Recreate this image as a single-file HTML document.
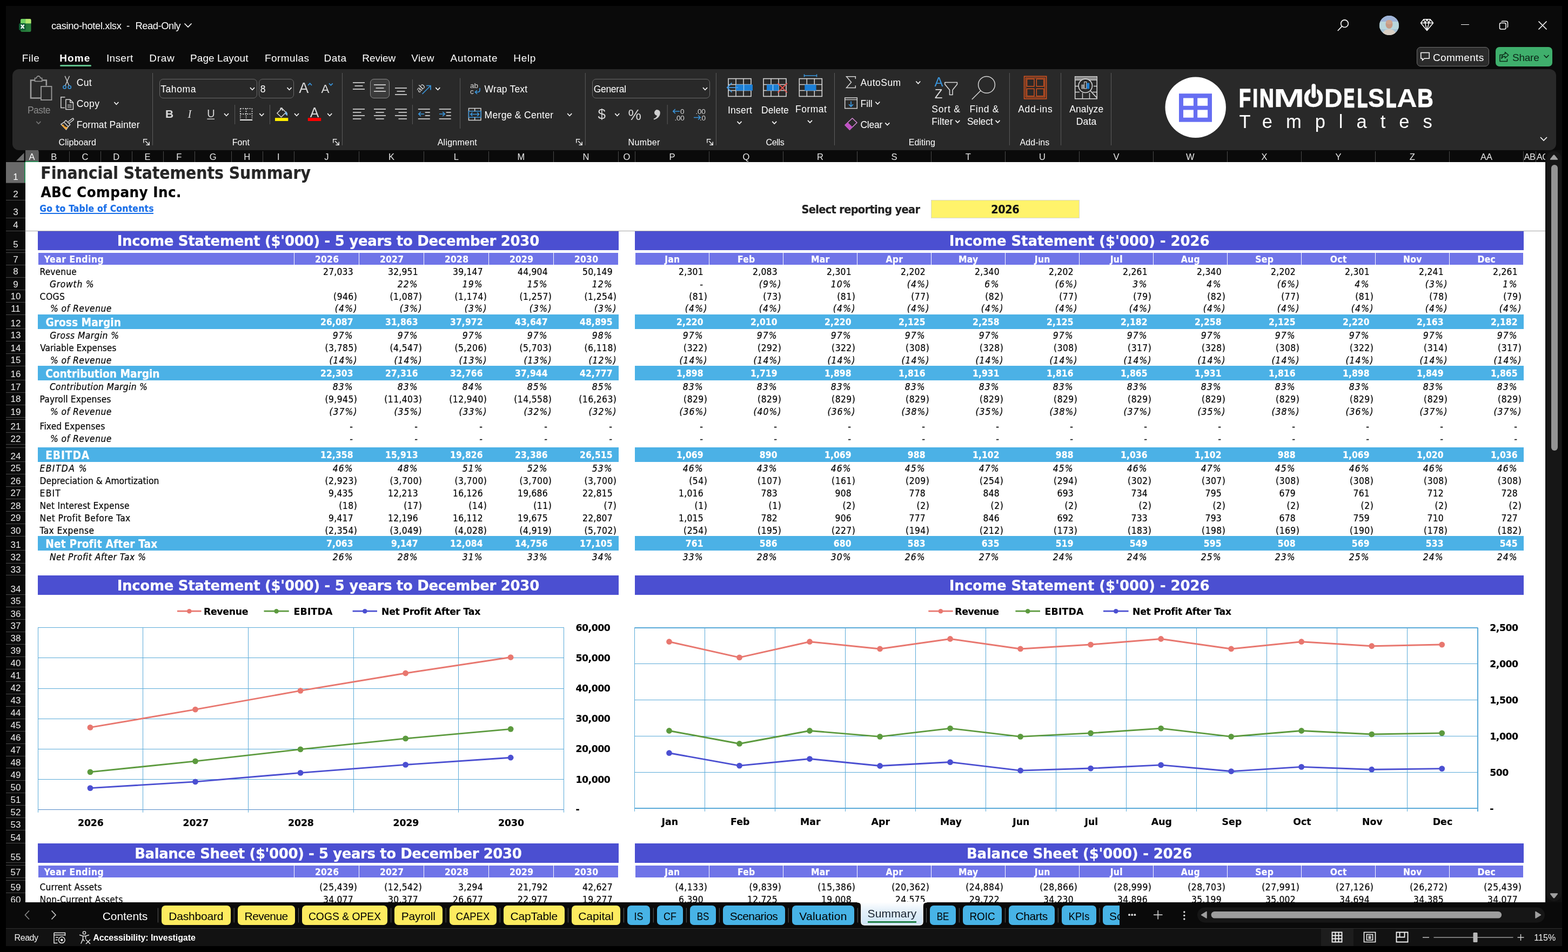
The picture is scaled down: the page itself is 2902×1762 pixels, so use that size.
<!DOCTYPE html>
<html lang="en"><head><meta charset="utf-8"><title>casino-hotel.xlsx - Excel</title>
<style>
html,body{margin:0;padding:0;background:#000;}
body{width:2902px;height:1762px;position:relative;overflow:hidden;}
#app{position:absolute;left:0;top:0;width:2902px;height:1762px;overflow:hidden;background:#000;will-change:transform;}
#app div,#app span,#app svg{position:absolute;box-sizing:border-box;}
#app span{white-space:pre;line-height:1;}
.T{font-family:'DejaVu Sans Condensed','DejaVu Sans',sans-serif;-webkit-text-stroke:0.2px;}
.S{font-family:'Liberation Sans',sans-serif;}
.D{font-family:'DejaVu Sans',sans-serif;-webkit-text-stroke:0.2px;}
.b{font-weight:bold;}
.i{font-style:italic;}
</style></head>
<body><div id="app">
<div style="left:11px;top:11px;width:2880px;height:1740px;background:#0a0a0a;"></div>
<svg style="left:34px;top:34px" width="26" height="27" viewBox="0 0 26 27">
<defs><clipPath id="xb"><rect x="4" y="0.800" width="19.700" height="24.200" rx="3"/></clipPath><linearGradient id="xg" x1="0" y1="0" x2="1" y2="1"><stop offset="0" stop-color="#1b6a30"/><stop offset="1" stop-color="#2c8540"/></linearGradient></defs>
<g clip-path="url(#xb)"><rect x="4" y="0.800" width="19.700" height="24.200" fill="url(#xg)"/>
<rect x="4" y="0.800" width="9.200" height="8.600" fill="#6ed162"/><rect x="13.200" y="0.800" width="10.500" height="8.600" fill="#b5e86f"/></g>
<rect x="1" y="9" width="12.700" height="13" rx="2.600" fill="#0f5c33"/>
<path d="M4.900 11.700L10.600 18.900M10.600 11.700L4.900 18.900" stroke="#fff" stroke-width="2.300" fill="none"/></svg>
<span class="S" style="left:95px;top:39px;font-size:18.4px;color:#fff;letter-spacing:-0.38px;">casino-hotel.xlsx</span>
<span class="S" style="left:234px;top:39px;font-size:18.4px;color:#fff;">-</span>
<span class="S" style="left:250.5px;top:39px;font-size:18.4px;color:#fff;letter-spacing:-0.49px;">Read-Only</span>
<svg style="left:340px;top:41px" width="16" height="12" viewBox="0 0 16 12"><path d="M1.500 2.500L8 9L14.500 2.500" stroke="#fff" stroke-width="1.600" fill="none"/></svg>
<svg style="left:2472px;top:33px" width="28" height="28" viewBox="0 0 28 28"><circle cx="16.500" cy="10.700" r="6.800" stroke="#fff" stroke-width="1.600" fill="none"/><path d="M11.700 15.600L3.800 24" stroke="#fff" stroke-width="1.600" fill="none"/></svg>
<svg style="left:2552px;top:28px" width="38" height="38" viewBox="0 0 38 38"><defs><clipPath id="av"><circle cx="19" cy="19" r="18"/></clipPath></defs>
<g clip-path="url(#av)"><rect width="38" height="38" fill="#a9c4d6"/><rect y="0" width="38" height="12" fill="#9fb4d8"/><rect y="12" width="38" height="14" fill="#b9d6dc"/>
<ellipse cx="19" cy="17" rx="6.500" ry="8" fill="#c69a84"/><path d="M6 38C7 29 12 26 19 26S31 29 32 38Z" fill="#d9cfc4"/><ellipse cx="19" cy="13" rx="6" ry="4" fill="#cfa690"/></g></svg>
<svg style="left:2628px;top:34px" width="26" height="24" viewBox="0 0 26 24"><path d="M7 1.800H19L24.500 8.500L13 22.500L1.500 8.500ZM1.500 8.500H24.500M7 1.800L9.500 8.500L13 22.500L16.500 8.500L19 1.800M9.500 8.500L13 1.800L16.500 8.500" stroke="#fff" stroke-width="1.500" fill="none" stroke-linejoin="round"/></svg>
<div style="left:2703.5px;top:44.8px;width:15.5px;height:1.6px;background:#fff;"></div>
<svg style="left:2774px;top:38px" width="18" height="18" viewBox="0 0 18 18"><rect x="1.500" y="4.500" width="11.500" height="11.500" rx="2.500" stroke="#fff" stroke-width="1.500" fill="none"/><path d="M5 2.300Q5.500 1.300 7 1.300H13.500Q16.500 1.300 16.500 4.300V11Q16.500 12.300 15.500 12.800" stroke="#fff" stroke-width="1.500" fill="none"/></svg>
<svg style="left:2846px;top:38px" width="18" height="18" viewBox="0 0 18 18"><path d="M1.500 1.500L16.500 16.500M16.500 1.500L1.500 16.500" stroke="#fff" stroke-width="1.600" fill="none"/></svg>
<div style="left:2621.5px;top:87px;width:134.5px;height:36px;background:#2b2b2b;border:1px solid #707070;border-radius:7px;"></div>
<svg style="left:2628px;top:95px" width="20" height="20" viewBox="0 0 20 20"><path d="M1.800 2.500H17.200V13.200H8L4.500 16.800V13.200H1.800Z" stroke="#fff" stroke-width="1.500" fill="none" stroke-linejoin="round"/></svg>
<span class="S" style="left:2652px;top:97px;font-size:19px;color:#fff;letter-spacing:0.33px;">Comments</span>
<div style="left:2768px;top:87px;width:105px;height:36px;background:#3faf6c;border-radius:7px;"></div>
<svg style="left:2774px;top:94px" width="20" height="22" viewBox="0 0 20 22"><path d="M8 7.500H2V19.500H15.500V15M11.500 2.500L17.800 8L11.500 13.500V10.200Q6.500 10.200 5.200 14.500Q5.200 6.500 11.500 5.800Z" stroke="#0b2a17" stroke-width="1.500" fill="none" stroke-linejoin="round"/></svg>
<span class="S" style="left:2799px;top:97px;font-size:19px;color:#0b2416;letter-spacing:-0.24px;">Share</span>
<svg style="left:2856px;top:100px" width="12" height="9" viewBox="0 0 12 9"><path d="M1.500 2L6 6.500L10.500 2" stroke="#0b2416" stroke-width="1.600" fill="none"/></svg>
<span class="S" style="left:40.8px;top:98px;font-size:19px;color:#fff;letter-spacing:0.44px;">File</span>
<span class="S b" style="left:110.2px;top:98px;font-size:19px;color:#fff;letter-spacing:1.1px;">Home</span>
<span class="S" style="left:197px;top:98px;font-size:19px;color:#fff;letter-spacing:0.33px;">Insert</span>
<span class="S" style="left:276.2px;top:98px;font-size:19px;color:#fff;letter-spacing:0.76px;">Draw</span>
<span class="S" style="left:352px;top:98px;font-size:19px;color:#fff;letter-spacing:0.08px;">Page Layout</span>
<span class="S" style="left:490px;top:98px;font-size:19px;color:#fff;letter-spacing:0.4px;">Formulas</span>
<span class="S" style="left:599.6px;top:98px;font-size:19px;color:#fff;letter-spacing:0.41px;">Data</span>
<span class="S" style="left:670.3px;top:98px;font-size:19px;color:#fff;letter-spacing:-0.05px;">Review</span>
<span class="S" style="left:761.2px;top:98px;font-size:19px;color:#fff;letter-spacing:0.44px;">View</span>
<span class="S" style="left:833.4px;top:98px;font-size:19px;color:#fff;letter-spacing:0.85px;">Automate</span>
<span class="S" style="left:950.3px;top:98px;font-size:19px;color:#fff;letter-spacing:0.66px;">Help</span>
<div style="left:111px;top:120px;width:58px;height:3px;background:#5fbf8b;border-radius:1.5px;"></div>
<div style="left:22.5px;top:128px;width:2857.5px;height:150px;background:#292929;border-radius:12px;"></div>
<div style="left:11px;top:278px;width:2849px;height:22px;background:#0a0a0a;"></div>
<svg style="left:28px;top:281px" width="18" height="18" viewBox="0 0 18 18"><path d="M16.500 2V16.500H2Z" fill="#6e6e6e"/></svg>
<div style="left:47px;top:278px;width:24px;height:22px;background:#5e5e5e;border-bottom:2px solid #2d8a57;"></div>
<span class="S" style="left:-541px;width:1200px;text-align:center;top:282px;font-size:16.5px;color:#fff;">A</span>
<span class="S" style="left:-500.25px;width:1200px;text-align:center;top:282px;font-size:16.5px;color:#e8e8e8;">B</span>
<span class="S" style="left:-442.5px;width:1200px;text-align:center;top:282px;font-size:16.5px;color:#e8e8e8;">C</span>
<div style="left:128px;top:280px;width:1px;height:20px;background:#4a4a4a;"></div>
<span class="S" style="left:-384.75px;width:1200px;text-align:center;top:282px;font-size:16.5px;color:#e8e8e8;">D</span>
<div style="left:186px;top:280px;width:1px;height:20px;background:#4a4a4a;"></div>
<span class="S" style="left:-327px;width:1200px;text-align:center;top:282px;font-size:16.5px;color:#e8e8e8;">E</span>
<div style="left:243.5px;top:280px;width:1px;height:20px;background:#4a4a4a;"></div>
<span class="S" style="left:-268.8px;width:1200px;text-align:center;top:282px;font-size:16.5px;color:#e8e8e8;">F</span>
<div style="left:301.5px;top:280px;width:1px;height:20px;background:#4a4a4a;"></div>
<span class="S" style="left:-205.8px;width:1200px;text-align:center;top:282px;font-size:16.5px;color:#e8e8e8;">G</span>
<div style="left:359.9px;top:280px;width:1px;height:20px;background:#4a4a4a;"></div>
<span class="S" style="left:-142.85px;width:1200px;text-align:center;top:282px;font-size:16.5px;color:#e8e8e8;">H</span>
<div style="left:427.5px;top:280px;width:1px;height:20px;background:#4a4a4a;"></div>
<span class="S" style="left:-84.65px;width:1200px;text-align:center;top:282px;font-size:16.5px;color:#e8e8e8;">I</span>
<div style="left:485.8px;top:280px;width:1px;height:20px;background:#4a4a4a;"></div>
<span class="S" style="left:4.4px;width:1200px;text-align:center;top:282px;font-size:16.5px;color:#e8e8e8;">J</span>
<div style="left:543.9px;top:280px;width:1px;height:20px;background:#4a4a4a;"></div>
<span class="S" style="left:124.4px;width:1200px;text-align:center;top:282px;font-size:16.5px;color:#e8e8e8;">K</span>
<div style="left:663.9px;top:280px;width:1px;height:20px;background:#4a4a4a;"></div>
<span class="S" style="left:244.4px;width:1200px;text-align:center;top:282px;font-size:16.5px;color:#e8e8e8;">L</span>
<div style="left:783.9px;top:280px;width:1px;height:20px;background:#4a4a4a;"></div>
<span class="S" style="left:364.4px;width:1200px;text-align:center;top:282px;font-size:16.5px;color:#e8e8e8;">M</span>
<div style="left:903.9px;top:280px;width:1px;height:20px;background:#4a4a4a;"></div>
<span class="S" style="left:484.4px;width:1200px;text-align:center;top:282px;font-size:16.5px;color:#e8e8e8;">N</span>
<div style="left:1023.9px;top:280px;width:1px;height:20px;background:#4a4a4a;"></div>
<span class="S" style="left:559.9px;width:1200px;text-align:center;top:282px;font-size:16.5px;color:#e8e8e8;">O</span>
<div style="left:1143.9px;top:280px;width:1px;height:20px;background:#4a4a4a;"></div>
<span class="S" style="left:643.9px;width:1200px;text-align:center;top:282px;font-size:16.5px;color:#e8e8e8;">P</span>
<div style="left:1174.9px;top:280px;width:1px;height:20px;background:#4a4a4a;"></div>
<span class="S" style="left:780.9px;width:1200px;text-align:center;top:282px;font-size:16.5px;color:#e8e8e8;">Q</span>
<div style="left:1311.9px;top:280px;width:1px;height:20px;background:#4a4a4a;"></div>
<span class="S" style="left:917.9px;width:1200px;text-align:center;top:282px;font-size:16.5px;color:#e8e8e8;">R</span>
<div style="left:1448.9px;top:280px;width:1px;height:20px;background:#4a4a4a;"></div>
<span class="S" style="left:1054.9px;width:1200px;text-align:center;top:282px;font-size:16.5px;color:#e8e8e8;">S</span>
<div style="left:1585.9px;top:280px;width:1px;height:20px;background:#4a4a4a;"></div>
<span class="S" style="left:1191.9px;width:1200px;text-align:center;top:282px;font-size:16.5px;color:#e8e8e8;">T</span>
<div style="left:1722.9px;top:280px;width:1px;height:20px;background:#4a4a4a;"></div>
<span class="S" style="left:1328.9px;width:1200px;text-align:center;top:282px;font-size:16.5px;color:#e8e8e8;">U</span>
<div style="left:1859.9px;top:280px;width:1px;height:20px;background:#4a4a4a;"></div>
<span class="S" style="left:1465.9px;width:1200px;text-align:center;top:282px;font-size:16.5px;color:#e8e8e8;">V</span>
<div style="left:1996.9px;top:280px;width:1px;height:20px;background:#4a4a4a;"></div>
<span class="S" style="left:1602.9px;width:1200px;text-align:center;top:282px;font-size:16.5px;color:#e8e8e8;">W</span>
<div style="left:2133.9px;top:280px;width:1px;height:20px;background:#4a4a4a;"></div>
<span class="S" style="left:1739.9px;width:1200px;text-align:center;top:282px;font-size:16.5px;color:#e8e8e8;">X</span>
<div style="left:2270.9px;top:280px;width:1px;height:20px;background:#4a4a4a;"></div>
<span class="S" style="left:1876.9px;width:1200px;text-align:center;top:282px;font-size:16.5px;color:#e8e8e8;">Y</span>
<div style="left:2407.9px;top:280px;width:1px;height:20px;background:#4a4a4a;"></div>
<span class="S" style="left:2013.9px;width:1200px;text-align:center;top:282px;font-size:16.5px;color:#e8e8e8;">Z</span>
<div style="left:2544.9px;top:280px;width:1px;height:20px;background:#4a4a4a;"></div>
<span class="S" style="left:2150.9px;width:1200px;text-align:center;top:282px;font-size:16.5px;color:#e8e8e8;">AA</span>
<div style="left:2681.9px;top:280px;width:1px;height:20px;background:#4a4a4a;"></div>
<span class="S" style="left:2820.4px;top:282px;font-size:16.5px;color:#e8e8e8;letter-spacing:-0.5px;">AB</span>
<div style="left:2818.9px;top:280px;width:1px;height:20px;background:#4a4a4a;"></div>
<span class="S" style="left:2843.7px;top:282px;font-size:16.5px;color:#e8e8e8;letter-spacing:-0.5px;">AC</span>
<div style="left:2842.2px;top:280px;width:1px;height:20px;background:#4a4a4a;"></div>
<div style="left:71px;top:280px;width:1px;height:20px;background:#4a4a4a;"></div>
<div style="left:11px;top:300px;width:36px;height:1370px;background:#0a0a0a;"></div>
<div style="left:11px;top:300px;width:36px;height:38px;background:#6a6a6a;border-right:2px solid #2d8a57;"></div>
<div style="left:11px;top:338px;width:36px;height:1px;background:#484848;"></div>
<span class="S" style="left:-571px;width:1200px;text-align:center;top:319px;font-size:17px;color:#fff;">1</span>
<div style="left:11px;top:370px;width:36px;height:1px;background:#484848;"></div>
<span class="S" style="left:-571px;width:1200px;text-align:center;top:351px;font-size:17px;color:#ececec;">2</span>
<div style="left:11px;top:403px;width:36px;height:1px;background:#484848;"></div>
<span class="S" style="left:-571px;width:1200px;text-align:center;top:384px;font-size:17px;color:#ececec;">3</span>
<div style="left:11px;top:427px;width:36px;height:1px;background:#484848;"></div>
<span class="S" style="left:-571px;width:1200px;text-align:center;top:408px;font-size:17px;color:#ececec;">4</span>
<div style="left:11px;top:462px;width:36px;height:1px;background:#484848;"></div>
<span class="S" style="left:-571px;width:1200px;text-align:center;top:444px;font-size:17px;color:#ececec;">5</span>
<div style="left:11px;top:467px;width:36px;height:1px;background:#484848;"></div>
<div style="left:11px;top:490px;width:36px;height:1px;background:#484848;"></div>
<span class="S" style="left:-571px;width:1200px;text-align:center;top:472px;font-size:17px;color:#ececec;">7</span>
<div style="left:11px;top:513px;width:36px;height:1px;background:#484848;"></div>
<span class="S" style="left:-571px;width:1200px;text-align:center;top:494px;font-size:17px;color:#ececec;">8</span>
<div style="left:11px;top:536px;width:36px;height:1px;background:#484848;"></div>
<span class="S" style="left:-571px;width:1200px;text-align:center;top:518px;font-size:17px;color:#ececec;">9</span>
<div style="left:11px;top:559px;width:36px;height:1px;background:#484848;"></div>
<span class="S" style="left:-571px;width:1200px;text-align:center;top:540px;font-size:17px;color:#ececec;">10</span>
<div style="left:11px;top:582px;width:36px;height:1px;background:#484848;"></div>
<span class="S" style="left:-571px;width:1200px;text-align:center;top:563px;font-size:17px;color:#ececec;">11</span>
<div style="left:11px;top:608px;width:36px;height:1px;background:#484848;"></div>
<span class="S" style="left:-571px;width:1200px;text-align:center;top:590px;font-size:17px;color:#ececec;">12</span>
<div style="left:11px;top:631px;width:36px;height:1px;background:#484848;"></div>
<span class="S" style="left:-571px;width:1200px;text-align:center;top:612px;font-size:17px;color:#ececec;">13</span>
<div style="left:11px;top:654px;width:36px;height:1px;background:#484848;"></div>
<span class="S" style="left:-571px;width:1200px;text-align:center;top:636px;font-size:17px;color:#ececec;">14</span>
<div style="left:11px;top:677px;width:36px;height:1px;background:#484848;"></div>
<span class="S" style="left:-571px;width:1200px;text-align:center;top:658px;font-size:17px;color:#ececec;">15</span>
<div style="left:11px;top:703px;width:36px;height:1px;background:#484848;"></div>
<span class="S" style="left:-571px;width:1200px;text-align:center;top:684px;font-size:17px;color:#ececec;">16</span>
<div style="left:11px;top:726px;width:36px;height:1px;background:#484848;"></div>
<span class="S" style="left:-571px;width:1200px;text-align:center;top:708px;font-size:17px;color:#ececec;">17</span>
<div style="left:11px;top:749px;width:36px;height:1px;background:#484848;"></div>
<span class="S" style="left:-571px;width:1200px;text-align:center;top:730px;font-size:17px;color:#ececec;">18</span>
<div style="left:11px;top:772px;width:36px;height:1px;background:#484848;"></div>
<span class="S" style="left:-571px;width:1200px;text-align:center;top:754px;font-size:17px;color:#ececec;">19</span>
<div style="left:11px;top:776px;width:36px;height:1px;background:#484848;"></div>
<div style="left:11px;top:800px;width:36px;height:1px;background:#484848;"></div>
<span class="S" style="left:-571px;width:1200px;text-align:center;top:781px;font-size:17px;color:#ececec;">21</span>
<div style="left:11px;top:822px;width:36px;height:1px;background:#484848;"></div>
<span class="S" style="left:-571px;width:1200px;text-align:center;top:804px;font-size:17px;color:#ececec;">22</span>
<div style="left:11px;top:828px;width:36px;height:1px;background:#484848;"></div>
<div style="left:11px;top:854px;width:36px;height:1px;background:#484848;"></div>
<span class="S" style="left:-571px;width:1200px;text-align:center;top:836px;font-size:17px;color:#ececec;">24</span>
<div style="left:11px;top:877px;width:36px;height:1px;background:#484848;"></div>
<span class="S" style="left:-571px;width:1200px;text-align:center;top:858px;font-size:17px;color:#ececec;">25</span>
<div style="left:11px;top:900px;width:36px;height:1px;background:#484848;"></div>
<span class="S" style="left:-571px;width:1200px;text-align:center;top:882px;font-size:17px;color:#ececec;">26</span>
<div style="left:11px;top:923px;width:36px;height:1px;background:#484848;"></div>
<span class="S" style="left:-571px;width:1200px;text-align:center;top:904px;font-size:17px;color:#ececec;">27</span>
<div style="left:11px;top:946px;width:36px;height:1px;background:#484848;"></div>
<span class="S" style="left:-571px;width:1200px;text-align:center;top:928px;font-size:17px;color:#ececec;">28</span>
<div style="left:11px;top:969px;width:36px;height:1px;background:#484848;"></div>
<span class="S" style="left:-571px;width:1200px;text-align:center;top:950px;font-size:17px;color:#ececec;">29</span>
<div style="left:11px;top:992px;width:36px;height:1px;background:#484848;"></div>
<span class="S" style="left:-571px;width:1200px;text-align:center;top:974px;font-size:17px;color:#ececec;">30</span>
<div style="left:11px;top:1018px;width:36px;height:1px;background:#484848;"></div>
<span class="S" style="left:-571px;width:1200px;text-align:center;top:1000px;font-size:17px;color:#ececec;">31</span>
<div style="left:11px;top:1042px;width:36px;height:1px;background:#484848;"></div>
<span class="S" style="left:-571px;width:1200px;text-align:center;top:1023px;font-size:17px;color:#ececec;">32</span>
<div style="left:11px;top:1064px;width:36px;height:1px;background:#484848;"></div>
<span class="S" style="left:-571px;width:1200px;text-align:center;top:1046px;font-size:17px;color:#ececec;">33</span>
<div style="left:11px;top:1100px;width:36px;height:1px;background:#484848;"></div>
<span class="S" style="left:-571px;width:1200px;text-align:center;top:1082px;font-size:17px;color:#ececec;">34</span>
<div style="left:11px;top:1123px;width:36px;height:1px;background:#484848;"></div>
<span class="S" style="left:-571px;width:1200px;text-align:center;top:1104px;font-size:17px;color:#ececec;">35</span>
<div style="left:11px;top:1146px;width:36px;height:1px;background:#484848;"></div>
<span class="S" style="left:-571px;width:1200px;text-align:center;top:1128px;font-size:17px;color:#ececec;">36</span>
<div style="left:11px;top:1169px;width:36px;height:1px;background:#484848;"></div>
<span class="S" style="left:-571px;width:1200px;text-align:center;top:1150px;font-size:17px;color:#ececec;">37</span>
<div style="left:11px;top:1192px;width:36px;height:1px;background:#484848;"></div>
<span class="S" style="left:-571px;width:1200px;text-align:center;top:1173px;font-size:17px;color:#ececec;">38</span>
<div style="left:11px;top:1215px;width:36px;height:1px;background:#484848;"></div>
<span class="S" style="left:-571px;width:1200px;text-align:center;top:1196px;font-size:17px;color:#ececec;">39</span>
<div style="left:11px;top:1238px;width:36px;height:1px;background:#484848;"></div>
<span class="S" style="left:-571px;width:1200px;text-align:center;top:1219px;font-size:17px;color:#ececec;">40</span>
<div style="left:11px;top:1261px;width:36px;height:1px;background:#484848;"></div>
<span class="S" style="left:-571px;width:1200px;text-align:center;top:1242px;font-size:17px;color:#ececec;">41</span>
<div style="left:11px;top:1284px;width:36px;height:1px;background:#484848;"></div>
<span class="S" style="left:-571px;width:1200px;text-align:center;top:1265px;font-size:17px;color:#ececec;">42</span>
<div style="left:11px;top:1307px;width:36px;height:1px;background:#484848;"></div>
<span class="S" style="left:-571px;width:1200px;text-align:center;top:1288px;font-size:17px;color:#ececec;">43</span>
<div style="left:11px;top:1330px;width:36px;height:1px;background:#484848;"></div>
<span class="S" style="left:-571px;width:1200px;text-align:center;top:1311px;font-size:17px;color:#ececec;">44</span>
<div style="left:11px;top:1353px;width:36px;height:1px;background:#484848;"></div>
<span class="S" style="left:-571px;width:1200px;text-align:center;top:1334px;font-size:17px;color:#ececec;">45</span>
<div style="left:11px;top:1376px;width:36px;height:1px;background:#484848;"></div>
<span class="S" style="left:-571px;width:1200px;text-align:center;top:1357px;font-size:17px;color:#ececec;">46</span>
<div style="left:11px;top:1399px;width:36px;height:1px;background:#484848;"></div>
<span class="S" style="left:-571px;width:1200px;text-align:center;top:1380px;font-size:17px;color:#ececec;">47</span>
<div style="left:11px;top:1421px;width:36px;height:1px;background:#484848;"></div>
<span class="S" style="left:-571px;width:1200px;text-align:center;top:1403px;font-size:17px;color:#ececec;">48</span>
<div style="left:11px;top:1444px;width:36px;height:1px;background:#484848;"></div>
<span class="S" style="left:-571px;width:1200px;text-align:center;top:1426px;font-size:17px;color:#ececec;">49</span>
<div style="left:11px;top:1467px;width:36px;height:1px;background:#484848;"></div>
<span class="S" style="left:-571px;width:1200px;text-align:center;top:1449px;font-size:17px;color:#ececec;">50</span>
<div style="left:11px;top:1490px;width:36px;height:1px;background:#484848;"></div>
<span class="S" style="left:-571px;width:1200px;text-align:center;top:1472px;font-size:17px;color:#ececec;">51</span>
<div style="left:11px;top:1513px;width:36px;height:1px;background:#484848;"></div>
<span class="S" style="left:-571px;width:1200px;text-align:center;top:1495px;font-size:17px;color:#ececec;">52</span>
<div style="left:11px;top:1536px;width:36px;height:1px;background:#484848;"></div>
<span class="S" style="left:-571px;width:1200px;text-align:center;top:1518px;font-size:17px;color:#ececec;">53</span>
<div style="left:11px;top:1560px;width:36px;height:1px;background:#484848;"></div>
<span class="S" style="left:-571px;width:1200px;text-align:center;top:1542px;font-size:17px;color:#ececec;">54</span>
<div style="left:11px;top:1596px;width:36px;height:1px;background:#484848;"></div>
<span class="S" style="left:-571px;width:1200px;text-align:center;top:1578px;font-size:17px;color:#ececec;">55</span>
<div style="left:11px;top:1601px;width:36px;height:1px;background:#484848;"></div>
<div style="left:11px;top:1624px;width:36px;height:1px;background:#484848;"></div>
<span class="S" style="left:-571px;width:1200px;text-align:center;top:1606px;font-size:17px;color:#ececec;">57</span>
<div style="left:11px;top:1629px;width:36px;height:1px;background:#484848;"></div>
<div style="left:11px;top:1652px;width:36px;height:1px;background:#484848;"></div>
<span class="S" style="left:-571px;width:1200px;text-align:center;top:1634px;font-size:17px;color:#ececec;">59</span>
<div style="left:11px;top:1675px;width:36px;height:1px;background:#484848;"></div>
<span class="S" style="left:-571px;width:1200px;text-align:center;top:1657px;font-size:17px;color:#ececec;">60</span>
<div style="left:47px;top:300px;width:2813px;height:1370px;background:#fff;"></div>
<div style="left:2860px;top:278px;width:31px;height:1392px;background:#0f0f0f;"></div>
<div style="left:2862px;top:280px;width:28px;height:1388px;background:#161616;border-radius:14px;"></div>
<svg style="left:2867px;top:285px" width="18" height="12" viewBox="0 0 18 12"><path d="M9 1.500Q10 1.500 10.700 2.500L16 9.300Q16.800 10.800 15 10.800H3Q1.200 10.800 2 9.300L7.300 2.500Q8 1.500 9 1.500Z" fill="#a0a0a0"/></svg>
<svg style="left:2867px;top:1652px" width="18" height="12" viewBox="0 0 18 12"><path d="M9 10.500Q10 10.500 10.700 9.500L16 2.700Q16.800 1.200 15 1.200H3Q1.200 1.200 2 2.700L7.300 9.500Q8 10.500 9 10.500Z" fill="#a0a0a0"/></svg>
<div style="left:2870.5px;top:305px;width:12px;height:529px;background:#949494;border-radius:6px;"></div>
<span class="S" style="left:50.9px;top:196px;font-size:17.5px;color:#8a8a8a;letter-spacing:-0.53px;">Paste</span>
<span class="S" style="left:141.7px;top:145px;font-size:17.5px;color:#fff;letter-spacing:0.36px;">Cut</span>
<span class="S" style="left:141.7px;top:184px;font-size:17.5px;color:#fff;letter-spacing:0.49px;">Copy</span>
<span class="S" style="left:141.7px;top:223px;font-size:17.5px;color:#fff;letter-spacing:0.08px;">Format Painter</span>
<span class="S" style="left:108.5px;top:256px;font-size:16px;color:#fff;letter-spacing:0.11px;">Clipboard</span>
<div style="left:295px;top:146px;width:181px;height:36px;border:1px solid #6a6a6a;border-radius:7px;"></div>
<span class="S" style="left:297.2px;top:157px;font-size:17.5px;color:#fff;letter-spacing:0.59px;">Tahoma</span>
<div style="left:479px;top:146px;width:65px;height:36px;border:1px solid #6a6a6a;border-radius:7px;"></div>
<span class="S" style="left:481.7px;top:157px;font-size:17.5px;color:#fff;letter-spacing:1.57px;">8</span>
<span class="S b" style="left:306px;top:200px;font-size:21px;color:#d8d8d8;">B</span>
<span class="S i" style="left:347.5px;top:201px;font-size:21px;color:#d8d8d8;font-family:'Liberation Serif',serif;">I</span>
<span class="S" style="left:383.2px;top:200px;font-size:20px;color:#d8d8d8;">U</span>
<span class="S" style="left:553.2px;top:150px;font-size:27px;color:#d8d8d8;">A</span>
<span class="S" style="left:594.6px;top:154px;font-size:22.5px;color:#d8d8d8;">A</span>
<span class="S" style="left:573.8px;top:196px;font-size:25px;color:#d8d8d8;">A</span>
<span class="S" style="left:429.7px;top:256px;font-size:16px;color:#fff;letter-spacing:0.07px;">Font</span>
<div style="left:685px;top:146px;width:36px;height:36px;background:#3b3b3b;border:1px solid #8c8c8c;border-radius:7px;"></div>
<span class="S" style="left:770px;top:155px;font-size:15px;color:#d8d8d8;transform:rotate(-45deg);transform-origin:8px 8px;">ab</span>
<span class="S" style="left:870px;top:152px;font-size:13.5px;color:#d8d8d8;">ab</span>
<span class="S" style="left:870px;top:163px;font-size:13.5px;color:#d8d8d8;">c</span>
<span class="S" style="left:896.6px;top:157px;font-size:17.5px;color:#fff;letter-spacing:0.17px;">Wrap Text</span>
<span class="S" style="left:896.6px;top:205px;font-size:17.5px;color:#fff;letter-spacing:0.3px;">Merge &amp; Center</span>
<span class="S" style="left:809.7px;top:256px;font-size:16px;color:#fff;letter-spacing:0.24px;">Alignment</span>
<div style="left:1096px;top:146px;width:218px;height:36px;border:1px solid #6a6a6a;border-radius:7px;"></div>
<span class="S" style="left:1098.7px;top:157px;font-size:17.5px;color:#fff;letter-spacing:-0.32px;">General</span>
<span class="S" style="left:1106.5px;top:198px;font-size:26px;color:#d8d8d8;">$</span>
<span class="S" style="left:1162.5px;top:199px;font-size:27.5px;color:#d8d8d8;">%</span>
<span class="S" style="left:1259px;top:200px;font-size:13.5px;color:#d8d8d8;letter-spacing:-0.3px">0</span>
<span class="S" style="left:1248.5px;top:212px;font-size:13.5px;color:#d8d8d8;letter-spacing:-0.3px">.00</span>
<span class="S" style="left:1287.5px;top:200px;font-size:13.5px;color:#d8d8d8;letter-spacing:-0.3px">.00</span>
<span class="S" style="left:1295px;top:212px;font-size:13.5px;color:#d8d8d8;letter-spacing:-0.3px">.0</span>
<span class="S" style="left:1162.6px;top:256px;font-size:16px;color:#fff;letter-spacing:0.35px;">Number</span>
<span class="S" style="left:1347px;top:196px;font-size:17.5px;color:#fff;letter-spacing:0.24px;">Insert</span>
<span class="S" style="left:1409.1px;top:196px;font-size:17.5px;color:#fff;letter-spacing:0.02px;">Delete</span>
<span class="S" style="left:1472px;top:194px;font-size:17.5px;color:#fff;letter-spacing:0.49px;">Format</span>
<span class="S" style="left:1417.6px;top:256px;font-size:16px;color:#fff;letter-spacing:-0.37px;">Cells</span>
<span class="S" style="left:1592.5px;top:145px;font-size:17.5px;color:#fff;letter-spacing:0.45px;">AutoSum</span>
<span class="S" style="left:1592.5px;top:184px;font-size:17.5px;color:#fff;letter-spacing:-0.04px;">Fill</span>
<span class="S" style="left:1592.5px;top:223px;font-size:17.5px;color:#fff;letter-spacing:-0.27px;">Clear</span>
<span class="S" style="left:1729.5px;top:140px;font-size:24px;color:#3a96dd;">A</span>
<span class="S" style="left:1729.8px;top:162px;font-size:24px;color:#d8d8d8;">Z</span>
<span class="S" style="left:1724.2px;top:194px;font-size:17.5px;color:#fff;letter-spacing:0.83px;">Sort &amp;</span>
<span class="S" style="left:1724.2px;top:217px;font-size:17.5px;color:#fff;letter-spacing:0.08px;">Filter</span>
<span class="S" style="left:1794.5px;top:194px;font-size:17.5px;color:#fff;letter-spacing:0.65px;">Find &amp;</span>
<span class="S" style="left:1789.9px;top:217px;font-size:17.5px;color:#fff;letter-spacing:-0.19px;">Select</span>
<span class="S" style="left:1681.7px;top:256px;font-size:16px;color:#fff;letter-spacing:0.05px;">Editing</span>
<span class="S" style="left:1884.2px;top:194px;font-size:17.5px;color:#fff;letter-spacing:0.71px;">Add-ins</span>
<span class="S" style="left:1887.5px;top:256px;font-size:16px;color:#fff;letter-spacing:0.09px;">Add-ins</span>
<span class="S" style="left:1979.2px;top:194px;font-size:17.5px;color:#fff;letter-spacing:0.12px;">Analyze</span>
<span class="S" style="left:1991.8px;top:217px;font-size:17.5px;color:#fff;letter-spacing:0.16px;">Data</span>
<span style="left:0;top:0" aria-label="FINMODELSLAB"><span class="S b" style="left:2293.28px;top:158px;font-size:48px;color:#fff;transform:scaleX(0.75);transform-origin:0 0;-webkit-text-stroke:1.68px #fff;">F</span><span class="S b" style="left:2318.36px;top:158px;font-size:48px;color:#fff;transform:scaleX(0.78);transform-origin:0 0;-webkit-text-stroke:1.05px #fff;">I</span><span class="S b" style="left:2331.11px;top:158px;font-size:48px;color:#fff;transform:scaleX(0.77);transform-origin:0 0;-webkit-text-stroke:1.6px #fff;">N</span><span class="S b" style="left:2356.9px;top:158px;font-size:48px;color:#fff;transform:scaleX(1.43);transform-origin:0 0;">M</span><span class="S b" style="left:2412px;top:158px;font-size:48px;color:#fff;transform:scaleX(1.02);transform-origin:0 0;-webkit-text-stroke:0.27px #fff;">O</span><span class="S b" style="left:2450.74px;top:158px;font-size:48px;color:#fff;transform:scaleX(0.97);transform-origin:0 0;-webkit-text-stroke:0.49px #fff;">D</span><span class="S b" style="left:2487.49px;top:158px;font-size:48px;color:#fff;transform:scaleX(0.62);transform-origin:0 0;-webkit-text-stroke:2.4px #fff;">E</span><span class="S b" style="left:2511.83px;top:158px;font-size:48px;color:#fff;transform:scaleX(0.65);transform-origin:0 0;-webkit-text-stroke:2.4px #fff;">L</span><span class="S b" style="left:2532.43px;top:158px;font-size:48px;color:#fff;transform:scaleX(0.94);transform-origin:0 0;-webkit-text-stroke:0.63px #fff;">S</span><span class="S b" style="left:2565.32px;top:158px;font-size:48px;color:#fff;transform:scaleX(0.65);transform-origin:0 0;-webkit-text-stroke:2.4px #fff;">L</span><span class="S b" style="left:2584.91px;top:158px;font-size:48px;color:#fff;transform:scaleX(1.09);transform-origin:0 0;">A</span><span class="S b" style="left:2622.87px;top:158px;font-size:48px;color:#fff;transform:scaleX(0.86);transform-origin:0 0;-webkit-text-stroke:1.04px #fff;">B</span></span>
<span class="S" style="left:2293.5px;top:208px;font-size:34.5px;color:#fff;letter-spacing:25px;">Templates</span>
<svg style="left:0;top:128px" width="2902" height="150" viewBox="0 128 2902 150"><path d="M64 148.500H57V181.500H75.500" stroke="#9c9c9c" stroke-width="2.6" fill="none" /><path d="M78.500 148.500H85.800V158.500" stroke="#9c9c9c" stroke-width="2.6" fill="none" /><path d="M64.500 150.500V144.500H67.500A3.600 3.600 0 0 1 74.700 144.500H77.700V150.500Z" stroke="#9c9c9c" stroke-width="1.6" fill="none" /><rect x="76" y="160" width="19.5" height="25" rx="0" stroke="#9c9c9c" stroke-width="1.8" fill="none"/><path d="M67.3 224.85L71.3 229.15L75.3 224.85" stroke="#777" stroke-width="1.6" fill="none"/><path d="M120.200 140.800L127.800 158.500M128.500 140.800L120.700 158.500" stroke="#d6d6d6" stroke-width="1.4" fill="none" /><circle cx="119.600" cy="161.200" r="2.700" stroke="#3a96dd" stroke-width="1.600" fill="none"/><circle cx="128.700" cy="161.200" r="2.700" stroke="#3a96dd" stroke-width="1.600" fill="none"/><path d="M120.500 179.700H112.800V199.500H120" stroke="#d6d6d6" stroke-width="1.5" fill="none" /><path d="M121.800 184.200H129.800L135.500 190V202.500H121.800Z M129.800 184.200V190H135.500" stroke="#d6d6d6" stroke-width="1.5" fill="none" stroke-linejoin="round"/><path d="M125 194.5H132.5" stroke="#d6d6d6" stroke-width="1.3"/><path d="M125 198H132.5" stroke="#d6d6d6" stroke-width="1.3"/><path d="M211.4 189.05L215.4 193.35L219.4 189.05" stroke="#fff" stroke-width="1.6" fill="none"/><path d="M126.300 225.300L133.600 219.500Q135.200 218.500 136.100 219.900Q136.900 221.400 135.400 222.400L128 228" stroke="#d6d6d6" stroke-width="1.5" fill="none" stroke-linejoin="round"/><path d="M122 222.800L129.800 230.800L126.200 234.300L118.400 226.300Z" stroke="#d6d6d6" stroke-width="1.5" fill="none" stroke-linejoin="round"/><path d="M118.400 226.300L112.800 229.800L122.500 240L126.200 234.300" stroke="#d6d6d6" stroke-width="1.5" fill="none" stroke-linejoin="round"/><path d="M114.300 231.800L122.200 239.800L124.600 235.800Q119 235.300 116.800 230.500Z" stroke="#f0a83a" stroke-width="0.8" fill="#f0a030" stroke-linejoin="round"/><path d="M265.8 264.5V257.8H272.5 M269 261L276 268 M276.2 262.5V268.2H270.5" stroke="#e8e8e8" stroke-width="1.500" fill="none"/><path d="M282.5 135V269" stroke="#5c5c5c" stroke-width="1"/><path d="M463 162.15L467 166.45L471 162.15" stroke="#fff" stroke-width="1.6" fill="none"/><path d="M531.5 162.15L535.5 166.45L539.5 162.15" stroke="#fff" stroke-width="1.6" fill="none"/><path d="M383.3 220.3H397" stroke="#d6d6d6" stroke-width="1.4"/><path d="M415 210.15L419 214.45L423 210.15" stroke="#fff" stroke-width="1.6" fill="none"/><path d="M434.6 194V230" stroke="#5c5c5c" stroke-width="1"/><path d="M444.800 200.800H466.500M444.800 200.800V219M466.500 200.800V219M455.600 200.800V219M444.800 211H466.500" stroke="#d6d6d6" stroke-width="1.8" fill="none" stroke-dasharray="2 2.200"/><path d="M444 222H467.2" stroke="#f0f0f0" stroke-width="2"/><path d="M480.3 210.15L484.3 214.45L488.3 210.15" stroke="#fff" stroke-width="1.6" fill="none"/><path d="M499.5 194V230" stroke="#5c5c5c" stroke-width="1"/><path d="M512.800 209.500L521.800 200.500L529.200 208L520.500 216.800Z M519 203V201.500Q519 199.800 520.800 199.800Q522.600 199.800 522.600 201.500V205" stroke="#d6d6d6" stroke-width="1.5" fill="none" stroke-linejoin="round"/><path d="M529.500 206.500Q532.500 209.500 531.500 214Q529 211 527.500 210.500Z" stroke="#7db8e8" stroke-width="1" fill="#7db8e8" /><rect x="509" y="218.2" width="24.3" height="5.8" rx="0" stroke="none" stroke-width="0" fill="#ffee00"/><path d="M545 210.15L549 214.45L553 210.15" stroke="#fff" stroke-width="1.6" fill="none"/><path d="M570.200 157.800L573.600 154.200L577 157.800" stroke="#3a96dd" stroke-width="1.7" fill="none" /><path d="M609 154.300L612.400 157.800L615.800 154.300" stroke="#3a96dd" stroke-width="1.7" fill="none" /><rect x="569.8" y="218.2" width="24.4" height="5.8" rx="0" stroke="none" stroke-width="0" fill="#ff0000"/><path d="M606.2 210.15L610.2 214.45L614.2 210.15" stroke="#fff" stroke-width="1.6" fill="none"/><path d="M616.8 264.5V257.8H623.5 M620 261L627 268 M627.2 262.5V268.2H621.5" stroke="#e8e8e8" stroke-width="1.500" fill="none"/><path d="M633.5 135V269" stroke="#5c5c5c" stroke-width="1"/><path d="M653 153H675" stroke="#d6d6d6" stroke-width="1.7"/><path d="M656.5 159H671.5" stroke="#d6d6d6" stroke-width="1.7"/><path d="M653 165H675" stroke="#d6d6d6" stroke-width="1.7"/><path d="M692 157H714" stroke="#d6d6d6" stroke-width="1.7"/><path d="M695.5 163H710.5" stroke="#d6d6d6" stroke-width="1.7"/><path d="M692 169H714" stroke="#d6d6d6" stroke-width="1.7"/><path d="M731 163H753" stroke="#d6d6d6" stroke-width="1.7"/><path d="M734.5 169H749.5" stroke="#d6d6d6" stroke-width="1.7"/><path d="M731 175H753" stroke="#d6d6d6" stroke-width="1.7"/><path d="M763.4 147V182" stroke="#5c5c5c" stroke-width="1"/><path d="M781.500 174L796 159.500M789 158.500H797V166.500" stroke="#3a96dd" stroke-width="1.7" fill="none" /><path d="M806.3 162.15L810.3 166.45L814.3 162.15" stroke="#fff" stroke-width="1.6" fill="none"/><path d="M653 202H675" stroke="#d6d6d6" stroke-width="1.7"/><path d="M653 208H668.5" stroke="#d6d6d6" stroke-width="1.7"/><path d="M653 214H675" stroke="#d6d6d6" stroke-width="1.7"/><path d="M653 220H668.5" stroke="#d6d6d6" stroke-width="1.7"/><path d="M692 202H714" stroke="#d6d6d6" stroke-width="1.7"/><path d="M695.3 208H710.7" stroke="#d6d6d6" stroke-width="1.7"/><path d="M692 214H714" stroke="#d6d6d6" stroke-width="1.7"/><path d="M695.3 220H710.7" stroke="#d6d6d6" stroke-width="1.7"/><path d="M731 202H753" stroke="#d6d6d6" stroke-width="1.7"/><path d="M737.5 208H753" stroke="#d6d6d6" stroke-width="1.7"/><path d="M731 214H753" stroke="#d6d6d6" stroke-width="1.7"/><path d="M737.5 220H753" stroke="#d6d6d6" stroke-width="1.7"/><path d="M763.4 194V230" stroke="#5c5c5c" stroke-width="1"/><path d="M773.8 202H795.8" stroke="#d6d6d6" stroke-width="1.7"/><path d="M786.8 208H795.8" stroke="#d6d6d6" stroke-width="1.7"/><path d="M786.8 214H795.8" stroke="#d6d6d6" stroke-width="1.7"/><path d="M773.8 220H795.8" stroke="#d6d6d6" stroke-width="1.7"/><path d="M785 211H775M778.800 207L774.800 211L778.800 215" stroke="#3a96dd" stroke-width="1.7" fill="none" /><path d="M812.7 202H834.7" stroke="#d6d6d6" stroke-width="1.7"/><path d="M825.7 208H834.7" stroke="#d6d6d6" stroke-width="1.7"/><path d="M825.7 214H834.7" stroke="#d6d6d6" stroke-width="1.7"/><path d="M812.7 220H834.7" stroke="#d6d6d6" stroke-width="1.7"/><path d="M813 211H823M819.200 207L823.200 211L819.200 215" stroke="#3a96dd" stroke-width="1.7" fill="none" /><path d="M851.6 144.5V238" stroke="#5c5c5c" stroke-width="1"/><path d="M888 163V166.500Q888 170.500 884 170.500H879.500M883 167L879.500 170.500L883 174" stroke="#3a96dd" stroke-width="1.7" fill="none" /><rect x="867.5" y="200.5" width="22.5" height="22" rx="0" stroke="#d6d6d6" stroke-width="1.5" fill="none"/><rect x="867.5" y="205.8" width="22.5" height="11.4" rx="0" stroke="#3a96dd" stroke-width="1.5" fill="#292929"/><path d="M878.700 200.500V205.800M878.700 217.200V222.500" stroke="#d6d6d6" stroke-width="1.5" fill="none" /><path d="M871 211.500H886.500M874.300 208.300L871 211.500L874.300 214.700M883.200 208.300L886.500 211.500L883.200 214.700" stroke="#3a96dd" stroke-width="1.6" fill="none" /><path d="M1050.2 210.15L1054.2 214.45L1058.2 210.15" stroke="#fff" stroke-width="1.6" fill="none"/><path d="M1066.8 264.5V257.8H1073.5 M1070 261L1077 268 M1077.2 262.5V268.2H1071.5" stroke="#e8e8e8" stroke-width="1.500" fill="none"/><path d="M1083.3 135V269" stroke="#5c5c5c" stroke-width="1"/><path d="M1301 162.15L1305 166.45L1309 162.15" stroke="#fff" stroke-width="1.6" fill="none"/><path d="M1138.3 210.15L1142.3 214.45L1146.3 210.15" stroke="#fff" stroke-width="1.6" fill="none"/><path d="M1221.800 208.800C1221.800 215.500 1217 220 1210.300 221.600L1209.600 219.700C1213.500 218.300 1215.600 216.300 1216 213.900A5.400 5.400 0 1 1 1221.800 208.800Z" stroke="none" stroke-width="0" fill="#d0d0d0" /><path d="M1235.2 194V230" stroke="#5c5c5c" stroke-width="1"/><path d="M1258 206H1246M1249.800 202L1245.800 206L1249.800 210" stroke="#3a96dd" stroke-width="1.7" fill="none" /><path d="M1284 217.500H1296M1292.200 213.500L1296.200 217.500L1292.200 221.500" stroke="#3a96dd" stroke-width="1.7" fill="none" /><path d="M1308.8 264.5V257.8H1315.5 M1312 261L1319 268 M1319.2 262.5V268.2H1313.5" stroke="#e8e8e8" stroke-width="1.500" fill="none"/><path d="M1325.4 135V269" stroke="#5c5c5c" stroke-width="1"/><rect x="1348" y="145.6" width="42" height="32.8" rx="0" stroke="#d6d6d6" stroke-width="1.6" fill="none"/><path d="M1362 145.6V178.4M1376 145.6V178.4M1348 156.53H1390M1348 167.47H1390" stroke="#d6d6d6" stroke-width="1.5" fill="none" /><rect x="1362" y="156.5" width="31" height="11.2" rx="0" stroke="none" stroke-width="0" fill="#1c7fd6"/><path d="M1376.500 156.500V167.700" stroke="#9fd0f5" stroke-width="1.3" fill="none" /><path d="M1366 162.100H1346M1354.500 153.500L1345.800 162.100L1354.500 170.700" stroke="#4a9ee6" stroke-width="1.8" fill="none" /><path d="M1364.5 224.85L1368.5 229.15L1372.5 224.85" stroke="#fff" stroke-width="1.6" fill="none"/><rect x="1413" y="145.6" width="42" height="32.8" rx="0" stroke="#d6d6d6" stroke-width="1.6" fill="none"/><path d="M1427 145.6V178.4M1441 145.6V178.4M1413 156.53H1455M1413 167.47H1455" stroke="#d6d6d6" stroke-width="1.5" fill="none" /><rect x="1419" y="156.5" width="22" height="11.2" rx="0" stroke="none" stroke-width="0" fill="#1c7fd6"/><path d="M1430.500 156.500V167.700" stroke="#9fd0f5" stroke-width="1.3" fill="none" /><path d="M1434 156.500L1441 162.100L1434 167.700Z" stroke="none" stroke-width="0" fill="#1c7fd6" /><path d="M1439.500 154L1456.800 171.300M1456.800 154L1439.500 171.300" stroke="#e8544e" stroke-width="1.9" fill="none" /><path d="M1429.2 224.85L1433.2 229.15L1437.2 224.85" stroke="#fff" stroke-width="1.6" fill="none"/><rect x="1479.3" y="145.6" width="42" height="32.8" rx="0" stroke="#d6d6d6" stroke-width="1.6" fill="none"/><path d="M1493.3 145.6V178.4M1507.3 145.6V178.4M1479.3 156.53H1521.3M1479.3 167.47H1521.3" stroke="#d6d6d6" stroke-width="1.5" fill="none" /><rect x="1489.3" y="156.5" width="21.3" height="11.2" rx="0" stroke="none" stroke-width="0" fill="#1c7fd6"/><path d="M1488.500 140H1511.500M1488.500 137.500V142.500M1511.500 137.500V142.500" stroke="#3a96dd" stroke-width="1.6" fill="none" /><path d="M1495 222.85L1499 227.15L1503 222.85" stroke="#fff" stroke-width="1.6" fill="none"/><path d="M1544.5 135V269" stroke="#5c5c5c" stroke-width="1"/><path d="M1583.300 146V141.800H1566.500L1575.500 152.200L1566.500 162.500H1583.300V158.300" stroke="#d6d6d6" stroke-width="1.5" fill="none" stroke-linejoin="miter"/><path d="M1695.3 150.45L1699.3 154.75L1703.3 150.45" stroke="#fff" stroke-width="1.6" fill="none"/><rect x="1563.7" y="181" width="22.6" height="19.6" rx="0" stroke="#d6d6d6" stroke-width="1.5" fill="none"/><path d="M1563.7 184.5H1586.3" stroke="#d6d6d6" stroke-width="1.3"/><path d="M1575 187.500V197M1571 193.200L1575 197.200L1579 193.200" stroke="#3a96dd" stroke-width="1.7" fill="none" /><path d="M1620.3 188.45L1624.3 192.75L1628.3 188.45" stroke="#fff" stroke-width="1.6" fill="none"/><path d="M1564 231.500L1577.500 218.800L1586 227L1572.500 240.300Z" stroke="#d88ad8" stroke-width="1.5" fill="none" stroke-linejoin="round"/><path d="M1564 231.500L1569 226.800L1577.500 235.300L1572.500 240.300Z" stroke="#c050c4" stroke-width="1" fill="#c050c4" /><path d="M1638.3 227.35L1642.3 231.65L1646.3 227.35" stroke="#fff" stroke-width="1.6" fill="none"/><path d="M1748.700 152.500H1771.500V156L1763 166.500V175.500H1757.500V166.500L1748.700 156Z" stroke="#d6d6d6" stroke-width="1.6" fill="none" stroke-linejoin="round"/><path d="M1768.3 222.85L1772.3 227.15L1776.3 222.85" stroke="#fff" stroke-width="1.6" fill="none"/><circle cx="1826" cy="156.800" r="15.400" stroke="#d6d6d6" stroke-width="1.500" fill="none"/><path d="M1815 167.800L1798.800 184" stroke="#d6d6d6" stroke-width="1.6" fill="none" /><path d="M1842.5 222.85L1846.5 227.15L1850.5 222.85" stroke="#fff" stroke-width="1.6" fill="none"/><path d="M1868.4 135V269" stroke="#5c5c5c" stroke-width="1"/><rect x="1895.6" y="141.3" width="41" height="41.5" rx="0" stroke="#d2521f" stroke-width="1.7" fill="none"/><rect x="1898.5" y="144.2" width="35.2" height="35.7" rx="0" stroke="#d2521f" stroke-width="1.3" fill="none"/><rect x="1900.5" y="146.3" width="13.5" height="13.5" rx="0" stroke="#d2521f" stroke-width="1.5" fill="none"/><rect x="1900.5" y="164.3" width="13.5" height="13.5" rx="0" stroke="#d2521f" stroke-width="1.5" fill="none"/><rect x="1918.3" y="146.3" width="13.5" height="13.5" rx="0" stroke="#d2521f" stroke-width="1.5" fill="none"/><rect x="1918.3" y="164.3" width="13.5" height="13.5" rx="0" stroke="#d2521f" stroke-width="1.5" fill="none"/><path d="M1963.6 135V269" stroke="#5c5c5c" stroke-width="1"/><rect x="1989.7" y="141.8" width="40.5" height="41" rx="0" stroke="#d6d6d6" stroke-width="1.6" fill="none"/><rect x="1990.5" y="142.5" width="39" height="5" rx="0" stroke="none" stroke-width="0" fill="#8a8a8a"/><path d="M1989.700 148H2030.200M1989.700 159.500H1996M2024 159.500H2030.200M1989.700 170.500H1998M2022 170.500H2030.200M2003.500 172V182.800M2016.500 172V182.800" stroke="#d6d6d6" stroke-width="1.4" fill="none" /><circle cx="2008.800" cy="158.800" r="12.700" stroke="#d6d6d6" stroke-width="1.600" fill="#292929"/><rect x="2001.8" y="157" width="4" height="7" rx="0" stroke="#b0b0b0" stroke-width="0.8" fill="#8c8c8c"/><rect x="2006.8" y="151.5" width="4" height="12.5" rx="0" stroke="#e8e8e8" stroke-width="1" fill="none"/><rect x="2011.8" y="154" width="4" height="10" rx="0" stroke="#1c7fd6" stroke-width="0.8" fill="#1c7fd6"/><path d="M2018 168L2030 181" stroke="#d6d6d6" stroke-width="1.8" fill="none" /><path d="M2056.5 135V269" stroke="#5c5c5c" stroke-width="1"/><circle cx="2212.700" cy="198.800" r="56.200" fill="#fff"/><rect x="2182" y="173.200" width="61" height="52.500" fill="#666ef2"/><rect x="2190" y="181.5" width="18.900" height="14.300" fill="#fff"/><rect x="2190" y="203.4" width="18.900" height="14.300" fill="#fff"/><rect x="2216.2" y="181.5" width="18.900" height="14.300" fill="#fff"/><rect x="2216.2" y="203.4" width="18.900" height="14.300" fill="#fff"/><rect x="2425.300" y="153.500" width="12" height="29.500" rx="5" fill="#292929"/><rect x="2427.500" y="155" width="7.600" height="26.500" rx="3.800" fill="#fff"/><path d="M2851 254L2857 260L2863 254" stroke="#fff" stroke-width="1.6" fill="none"/></svg>
<span class="T b" style="left:75.3px;top:305px;font-size:31.6px;color:#262626;letter-spacing:-0.07px;">Financial Statements Summary</span>
<span class="T b" style="left:75.5px;top:342px;font-size:27.4px;letter-spacing:0.51px;">ABC Company Inc.</span>
<span class="T b" style="left:73.3px;top:378px;font-size:17.3px;color:#1a6fe8;letter-spacing:0.26px;">Go to Table of Contents</span>
<div style="left:74px;top:394.3px;width:210px;height:1.6px;background:#1a6fe8;"></div>
<span class="T b" style="left:1483.4px;top:377px;font-size:21.5px;color:#222;letter-spacing:-0.63px;">Select reporting year</span>
<div style="left:1723px;top:370px;width:274.8px;height:33.5px;background:#fff36b;border:1px solid #d6d6d0;"></div>
<span class="T b" style="left:1260.37px;width:1200px;text-align:center;top:377px;font-size:21.5px;color:#111;letter-spacing:-0.46px;">2026</span>
<div style="left:47px;top:427px;width:2813px;height:1px;background:#a6a6a6;"></div>
<div style="left:70px;top:427.8px;width:1075px;height:35.2px;background:#4b4fd1;"></div>
<span class="D b" style="left:7.34px;width:1200px;text-align:center;top:433px;font-size:26px;color:#fff;letter-spacing:-0.32px;">Income Statement ($'000) - 5 years to December 2030</span>
<div style="left:1175.4px;top:427.8px;width:1644.6px;height:35.2px;background:#4b4fd1;"></div>
<span class="D b" style="left:1397.67px;width:1200px;text-align:center;top:433px;font-size:26px;color:#fff;letter-spacing:-0.07px;">Income Statement ($'000) - 2026</span>
<div style="left:71px;top:468.3px;width:472.7px;height:21.6px;background:#6f74e8;"></div>
<span class="T b" style="left:81.8px;top:472px;font-size:17.3px;color:#fff;letter-spacing:0.58px;">Year Ending</span>
<div style="left:545.4px;top:468.3px;width:118.4px;height:21.6px;background:#6f74e8;"></div>
<span class="T b" style="left:5.11px;width:1200px;text-align:center;top:472px;font-size:17.3px;color:#fff;letter-spacing:0.23px;">2026</span>
<div style="left:665.4px;top:468.3px;width:118.4px;height:21.6px;background:#6f74e8;"></div>
<span class="T b" style="left:125.11px;width:1200px;text-align:center;top:472px;font-size:17.3px;color:#fff;letter-spacing:0.23px;">2027</span>
<div style="left:785.4px;top:468.3px;width:118.4px;height:21.6px;background:#6f74e8;"></div>
<span class="T b" style="left:245.11px;width:1200px;text-align:center;top:472px;font-size:17.3px;color:#fff;letter-spacing:0.23px;">2028</span>
<div style="left:905.4px;top:468.3px;width:118.4px;height:21.6px;background:#6f74e8;"></div>
<span class="T b" style="left:365.11px;width:1200px;text-align:center;top:472px;font-size:17.3px;color:#fff;letter-spacing:0.23px;">2029</span>
<div style="left:1025.4px;top:468.3px;width:118.4px;height:21.6px;background:#6f74e8;"></div>
<span class="T b" style="left:485.11px;width:1200px;text-align:center;top:472px;font-size:17.3px;color:#fff;letter-spacing:0.23px;">2030</span>
<div style="left:1176.4px;top:468.3px;width:135.4px;height:21.6px;background:#6f74e8;"></div>
<span class="T b" style="left:644.25px;width:1200px;text-align:center;top:472px;font-size:17.3px;color:#fff;letter-spacing:0.3px;">Jan</span>
<div style="left:1313.4px;top:468.3px;width:135.4px;height:21.6px;background:#6f74e8;"></div>
<span class="T b" style="left:781.25px;width:1200px;text-align:center;top:472px;font-size:17.3px;color:#fff;letter-spacing:0.3px;">Feb</span>
<div style="left:1450.4px;top:468.3px;width:135.4px;height:21.6px;background:#6f74e8;"></div>
<span class="T b" style="left:918.25px;width:1200px;text-align:center;top:472px;font-size:17.3px;color:#fff;letter-spacing:0.3px;">Mar</span>
<div style="left:1587.4px;top:468.3px;width:135.4px;height:21.6px;background:#6f74e8;"></div>
<span class="T b" style="left:1055.25px;width:1200px;text-align:center;top:472px;font-size:17.3px;color:#fff;letter-spacing:0.3px;">Apr</span>
<div style="left:1724.4px;top:468.3px;width:135.4px;height:21.6px;background:#6f74e8;"></div>
<span class="T b" style="left:1192.25px;width:1200px;text-align:center;top:472px;font-size:17.3px;color:#fff;letter-spacing:0.3px;">May</span>
<div style="left:1861.4px;top:468.3px;width:135.4px;height:21.6px;background:#6f74e8;"></div>
<span class="T b" style="left:1329.25px;width:1200px;text-align:center;top:472px;font-size:17.3px;color:#fff;letter-spacing:0.3px;">Jun</span>
<div style="left:1998.4px;top:468.3px;width:135.4px;height:21.6px;background:#6f74e8;"></div>
<span class="T b" style="left:1466.25px;width:1200px;text-align:center;top:472px;font-size:17.3px;color:#fff;letter-spacing:0.3px;">Jul</span>
<div style="left:2135.4px;top:468.3px;width:135.4px;height:21.6px;background:#6f74e8;"></div>
<span class="T b" style="left:1603.25px;width:1200px;text-align:center;top:472px;font-size:17.3px;color:#fff;letter-spacing:0.3px;">Aug</span>
<div style="left:2272.4px;top:468.3px;width:135.4px;height:21.6px;background:#6f74e8;"></div>
<span class="T b" style="left:1740.25px;width:1200px;text-align:center;top:472px;font-size:17.3px;color:#fff;letter-spacing:0.3px;">Sep</span>
<div style="left:2409.4px;top:468.3px;width:135.4px;height:21.6px;background:#6f74e8;"></div>
<span class="T b" style="left:1877.25px;width:1200px;text-align:center;top:472px;font-size:17.3px;color:#fff;letter-spacing:0.3px;">Oct</span>
<div style="left:2546.4px;top:468.3px;width:135.4px;height:21.6px;background:#6f74e8;"></div>
<span class="T b" style="left:2014.25px;width:1200px;text-align:center;top:472px;font-size:17.3px;color:#fff;letter-spacing:0.3px;">Nov</span>
<div style="left:2683.4px;top:468.3px;width:135.4px;height:21.6px;background:#6f74e8;"></div>
<span class="T b" style="left:2151.25px;width:1200px;text-align:center;top:472px;font-size:17.3px;color:#fff;letter-spacing:0.3px;">Dec</span>
<span class="T" style="left:73.6px;top:495px;font-size:17.3px;letter-spacing:0.08px;">Revenue</span>
<span class="T" style="right:2248.16px;top:495px;font-size:17.3px;letter-spacing:0.24px;">27,033</span>
<span class="T" style="right:2128.16px;top:495px;font-size:17.3px;letter-spacing:0.24px;">32,951</span>
<span class="T" style="right:2008.16px;top:495px;font-size:17.3px;letter-spacing:0.24px;">39,147</span>
<span class="T" style="right:1888.16px;top:495px;font-size:17.3px;letter-spacing:0.24px;">44,904</span>
<span class="T" style="right:1768.16px;top:495px;font-size:17.3px;letter-spacing:0.24px;">50,149</span>
<span class="T" style="right:1600.15px;top:495px;font-size:17.3px;letter-spacing:0.25px;">2,301</span>
<span class="T" style="right:1463.15px;top:495px;font-size:17.3px;letter-spacing:0.25px;">2,083</span>
<span class="T" style="right:1326.15px;top:495px;font-size:17.3px;letter-spacing:0.25px;">2,301</span>
<span class="T" style="right:1189.15px;top:495px;font-size:17.3px;letter-spacing:0.25px;">2,202</span>
<span class="T" style="right:1052.15px;top:495px;font-size:17.3px;letter-spacing:0.25px;">2,340</span>
<span class="T" style="right:915.15px;top:495px;font-size:17.3px;letter-spacing:0.25px;">2,202</span>
<span class="T" style="right:778.15px;top:495px;font-size:17.3px;letter-spacing:0.25px;">2,261</span>
<span class="T" style="right:641.15px;top:495px;font-size:17.3px;letter-spacing:0.25px;">2,340</span>
<span class="T" style="right:504.15px;top:495px;font-size:17.3px;letter-spacing:0.25px;">2,202</span>
<span class="T" style="right:367.15px;top:495px;font-size:17.3px;letter-spacing:0.25px;">2,301</span>
<span class="T" style="right:230.15px;top:495px;font-size:17.3px;letter-spacing:0.25px;">2,241</span>
<span class="T" style="right:93.15px;top:495px;font-size:17.3px;letter-spacing:0.25px;">2,261</span>
<span class="T i" style="left:91.9px;top:518px;font-size:17.3px;letter-spacing:0.76px;">Growth %</span>
<span class="T i" style="right:2128.23px;top:518px;font-size:17.3px;letter-spacing:1.17px;">22%</span>
<span class="T i" style="right:2008.23px;top:518px;font-size:17.3px;letter-spacing:1.17px;">19%</span>
<span class="T i" style="right:1888.23px;top:518px;font-size:17.3px;letter-spacing:1.17px;">15%</span>
<span class="T i" style="right:1768.23px;top:518px;font-size:17.3px;letter-spacing:1.17px;">12%</span>
<span class="T i" style="right:1600.05px;top:518px;font-size:17.3px;letter-spacing:1.05px;">-</span>
<span class="T i" style="right:1455.17px;top:518px;font-size:17.3px;letter-spacing:1.33px;">(9%)</span>
<span class="T i" style="right:1326.23px;top:518px;font-size:17.3px;letter-spacing:1.17px;">10%</span>
<span class="T i" style="right:1181.17px;top:518px;font-size:17.3px;letter-spacing:1.33px;">(4%)</span>
<span class="T i" style="right:1051.72px;top:518px;font-size:17.3px;letter-spacing:1.68px;">6%</span>
<span class="T i" style="right:907.17px;top:518px;font-size:17.3px;letter-spacing:1.33px;">(6%)</span>
<span class="T i" style="right:777.72px;top:518px;font-size:17.3px;letter-spacing:1.68px;">3%</span>
<span class="T i" style="right:640.72px;top:518px;font-size:17.3px;letter-spacing:1.68px;">4%</span>
<span class="T i" style="right:496.17px;top:518px;font-size:17.3px;letter-spacing:1.33px;">(6%)</span>
<span class="T i" style="right:366.72px;top:518px;font-size:17.3px;letter-spacing:1.68px;">4%</span>
<span class="T i" style="right:222.17px;top:518px;font-size:17.3px;letter-spacing:1.33px;">(3%)</span>
<span class="T i" style="right:92.72px;top:518px;font-size:17.3px;letter-spacing:1.68px;">1%</span>
<span class="T" style="left:73.6px;top:541px;font-size:17.3px;letter-spacing:0.44px;">COGS</span>
<span class="T" style="right:2240.72px;top:541px;font-size:17.3px;letter-spacing:0.48px;">(946)</span>
<span class="T" style="right:2120.74px;top:541px;font-size:17.3px;letter-spacing:0.46px;">(1,087)</span>
<span class="T" style="right:2000.74px;top:541px;font-size:17.3px;letter-spacing:0.46px;">(1,174)</span>
<span class="T" style="right:1880.74px;top:541px;font-size:17.3px;letter-spacing:0.46px;">(1,257)</span>
<span class="T" style="right:1760.74px;top:541px;font-size:17.3px;letter-spacing:0.46px;">(1,254)</span>
<span class="T" style="right:1592.63px;top:541px;font-size:17.3px;letter-spacing:0.57px;">(81)</span>
<span class="T" style="right:1455.63px;top:541px;font-size:17.3px;letter-spacing:0.57px;">(73)</span>
<span class="T" style="right:1318.63px;top:541px;font-size:17.3px;letter-spacing:0.57px;">(81)</span>
<span class="T" style="right:1181.63px;top:541px;font-size:17.3px;letter-spacing:0.57px;">(77)</span>
<span class="T" style="right:1044.63px;top:541px;font-size:17.3px;letter-spacing:0.57px;">(82)</span>
<span class="T" style="right:907.63px;top:541px;font-size:17.3px;letter-spacing:0.57px;">(77)</span>
<span class="T" style="right:770.63px;top:541px;font-size:17.3px;letter-spacing:0.57px;">(79)</span>
<span class="T" style="right:633.63px;top:541px;font-size:17.3px;letter-spacing:0.57px;">(82)</span>
<span class="T" style="right:496.63px;top:541px;font-size:17.3px;letter-spacing:0.57px;">(77)</span>
<span class="T" style="right:359.63px;top:541px;font-size:17.3px;letter-spacing:0.57px;">(81)</span>
<span class="T" style="right:222.63px;top:541px;font-size:17.3px;letter-spacing:0.57px;">(78)</span>
<span class="T" style="right:85.63px;top:541px;font-size:17.3px;letter-spacing:0.57px;">(79)</span>
<span class="T i" style="left:92.9px;top:563px;font-size:17.3px;letter-spacing:0.5px;">% of Revenue</span>
<span class="T i" style="right:2240.17px;top:563px;font-size:17.3px;letter-spacing:1.33px;">(4%)</span>
<span class="T i" style="right:2120.17px;top:563px;font-size:17.3px;letter-spacing:1.33px;">(3%)</span>
<span class="T i" style="right:2000.17px;top:563px;font-size:17.3px;letter-spacing:1.33px;">(3%)</span>
<span class="T i" style="right:1880.17px;top:563px;font-size:17.3px;letter-spacing:1.33px;">(3%)</span>
<span class="T i" style="right:1760.17px;top:563px;font-size:17.3px;letter-spacing:1.33px;">(3%)</span>
<span class="T i" style="right:1592.17px;top:563px;font-size:17.3px;letter-spacing:1.33px;">(4%)</span>
<span class="T i" style="right:1455.17px;top:563px;font-size:17.3px;letter-spacing:1.33px;">(4%)</span>
<span class="T i" style="right:1318.17px;top:563px;font-size:17.3px;letter-spacing:1.33px;">(4%)</span>
<span class="T i" style="right:1181.17px;top:563px;font-size:17.3px;letter-spacing:1.33px;">(4%)</span>
<span class="T i" style="right:1044.17px;top:563px;font-size:17.3px;letter-spacing:1.33px;">(4%)</span>
<span class="T i" style="right:907.17px;top:563px;font-size:17.3px;letter-spacing:1.33px;">(4%)</span>
<span class="T i" style="right:770.17px;top:563px;font-size:17.3px;letter-spacing:1.33px;">(4%)</span>
<span class="T i" style="right:633.17px;top:563px;font-size:17.3px;letter-spacing:1.33px;">(4%)</span>
<span class="T i" style="right:496.17px;top:563px;font-size:17.3px;letter-spacing:1.33px;">(4%)</span>
<span class="T i" style="right:359.17px;top:563px;font-size:17.3px;letter-spacing:1.33px;">(4%)</span>
<span class="T i" style="right:222.17px;top:563px;font-size:17.3px;letter-spacing:1.33px;">(4%)</span>
<span class="T i" style="right:85.17px;top:563px;font-size:17.3px;letter-spacing:1.33px;">(4%)</span>
<div style="left:70px;top:582px;width:1075px;height:27px;background:#4bb1e6;"></div>
<div style="left:1175.4px;top:582px;width:1644.6px;height:27px;background:#4bb1e6;"></div>
<span class="T b" style="left:84.4px;top:587px;font-size:20.7px;color:#fff;letter-spacing:0.05px;">Gross Margin</span>
<span class="T b" style="right:2248.27px;top:588px;font-size:17.3px;color:#fff;letter-spacing:0.13px;">26,087</span>
<span class="T b" style="right:2128.27px;top:588px;font-size:17.3px;color:#fff;letter-spacing:0.13px;">31,863</span>
<span class="T b" style="right:2008.27px;top:588px;font-size:17.3px;color:#fff;letter-spacing:0.13px;">37,972</span>
<span class="T b" style="right:1888.27px;top:588px;font-size:17.3px;color:#fff;letter-spacing:0.13px;">43,647</span>
<span class="T b" style="right:1768.27px;top:588px;font-size:17.3px;color:#fff;letter-spacing:0.13px;">48,895</span>
<span class="T b" style="right:1600.28px;top:588px;font-size:17.3px;color:#fff;letter-spacing:0.12px;">2,220</span>
<span class="T b" style="right:1463.28px;top:588px;font-size:17.3px;color:#fff;letter-spacing:0.12px;">2,010</span>
<span class="T b" style="right:1326.28px;top:588px;font-size:17.3px;color:#fff;letter-spacing:0.12px;">2,220</span>
<span class="T b" style="right:1189.28px;top:588px;font-size:17.3px;color:#fff;letter-spacing:0.12px;">2,125</span>
<span class="T b" style="right:1052.28px;top:588px;font-size:17.3px;color:#fff;letter-spacing:0.12px;">2,258</span>
<span class="T b" style="right:915.28px;top:588px;font-size:17.3px;color:#fff;letter-spacing:0.12px;">2,125</span>
<span class="T b" style="right:778.28px;top:588px;font-size:17.3px;color:#fff;letter-spacing:0.12px;">2,182</span>
<span class="T b" style="right:641.28px;top:588px;font-size:17.3px;color:#fff;letter-spacing:0.12px;">2,258</span>
<span class="T b" style="right:504.28px;top:588px;font-size:17.3px;color:#fff;letter-spacing:0.12px;">2,125</span>
<span class="T b" style="right:367.28px;top:588px;font-size:17.3px;color:#fff;letter-spacing:0.12px;">2,220</span>
<span class="T b" style="right:230.28px;top:588px;font-size:17.3px;color:#fff;letter-spacing:0.12px;">2,163</span>
<span class="T b" style="right:93.28px;top:588px;font-size:17.3px;color:#fff;letter-spacing:0.12px;">2,182</span>
<span class="T i" style="left:92.3px;top:613px;font-size:17.3px;letter-spacing:0.42px;">Gross Margin %</span>
<span class="T i" style="right:2248.23px;top:613px;font-size:17.3px;letter-spacing:1.17px;">97%</span>
<span class="T i" style="right:2128.23px;top:613px;font-size:17.3px;letter-spacing:1.17px;">97%</span>
<span class="T i" style="right:2008.23px;top:613px;font-size:17.3px;letter-spacing:1.17px;">97%</span>
<span class="T i" style="right:1888.23px;top:613px;font-size:17.3px;letter-spacing:1.17px;">97%</span>
<span class="T i" style="right:1768.23px;top:613px;font-size:17.3px;letter-spacing:1.17px;">98%</span>
<span class="T i" style="right:1600.23px;top:613px;font-size:17.3px;letter-spacing:1.17px;">97%</span>
<span class="T i" style="right:1463.23px;top:613px;font-size:17.3px;letter-spacing:1.17px;">97%</span>
<span class="T i" style="right:1326.23px;top:613px;font-size:17.3px;letter-spacing:1.17px;">97%</span>
<span class="T i" style="right:1189.23px;top:613px;font-size:17.3px;letter-spacing:1.17px;">97%</span>
<span class="T i" style="right:1052.23px;top:613px;font-size:17.3px;letter-spacing:1.17px;">97%</span>
<span class="T i" style="right:915.23px;top:613px;font-size:17.3px;letter-spacing:1.17px;">97%</span>
<span class="T i" style="right:778.23px;top:613px;font-size:17.3px;letter-spacing:1.17px;">97%</span>
<span class="T i" style="right:641.23px;top:613px;font-size:17.3px;letter-spacing:1.17px;">97%</span>
<span class="T i" style="right:504.23px;top:613px;font-size:17.3px;letter-spacing:1.17px;">97%</span>
<span class="T i" style="right:367.23px;top:613px;font-size:17.3px;letter-spacing:1.17px;">97%</span>
<span class="T i" style="right:230.23px;top:613px;font-size:17.3px;letter-spacing:1.17px;">97%</span>
<span class="T i" style="right:93.23px;top:613px;font-size:17.3px;letter-spacing:1.17px;">97%</span>
<span class="T" style="left:74.2px;top:636px;font-size:17.3px;letter-spacing:-0.04px;">Variable Expenses</span>
<span class="T" style="right:2240.74px;top:636px;font-size:17.3px;letter-spacing:0.46px;">(3,785)</span>
<span class="T" style="right:2120.74px;top:636px;font-size:17.3px;letter-spacing:0.46px;">(4,547)</span>
<span class="T" style="right:2000.74px;top:636px;font-size:17.3px;letter-spacing:0.46px;">(5,206)</span>
<span class="T" style="right:1880.74px;top:636px;font-size:17.3px;letter-spacing:0.46px;">(5,703)</span>
<span class="T" style="right:1760.74px;top:636px;font-size:17.3px;letter-spacing:0.46px;">(6,118)</span>
<span class="T" style="right:1592.72px;top:636px;font-size:17.3px;letter-spacing:0.48px;">(322)</span>
<span class="T" style="right:1455.72px;top:636px;font-size:17.3px;letter-spacing:0.48px;">(292)</span>
<span class="T" style="right:1318.72px;top:636px;font-size:17.3px;letter-spacing:0.48px;">(322)</span>
<span class="T" style="right:1181.72px;top:636px;font-size:17.3px;letter-spacing:0.48px;">(308)</span>
<span class="T" style="right:1044.72px;top:636px;font-size:17.3px;letter-spacing:0.48px;">(328)</span>
<span class="T" style="right:907.72px;top:636px;font-size:17.3px;letter-spacing:0.48px;">(308)</span>
<span class="T" style="right:770.72px;top:636px;font-size:17.3px;letter-spacing:0.48px;">(317)</span>
<span class="T" style="right:633.72px;top:636px;font-size:17.3px;letter-spacing:0.48px;">(328)</span>
<span class="T" style="right:496.72px;top:636px;font-size:17.3px;letter-spacing:0.48px;">(308)</span>
<span class="T" style="right:359.72px;top:636px;font-size:17.3px;letter-spacing:0.48px;">(322)</span>
<span class="T" style="right:222.72px;top:636px;font-size:17.3px;letter-spacing:0.48px;">(314)</span>
<span class="T" style="right:85.72px;top:636px;font-size:17.3px;letter-spacing:0.48px;">(317)</span>
<span class="T i" style="left:92.9px;top:659px;font-size:17.3px;letter-spacing:0.5px;">% of Revenue</span>
<span class="T i" style="right:2240.41px;top:659px;font-size:17.3px;letter-spacing:1.09px;">(14%)</span>
<span class="T i" style="right:2120.41px;top:659px;font-size:17.3px;letter-spacing:1.09px;">(14%)</span>
<span class="T i" style="right:2000.41px;top:659px;font-size:17.3px;letter-spacing:1.09px;">(13%)</span>
<span class="T i" style="right:1880.41px;top:659px;font-size:17.3px;letter-spacing:1.09px;">(13%)</span>
<span class="T i" style="right:1760.41px;top:659px;font-size:17.3px;letter-spacing:1.09px;">(12%)</span>
<span class="T i" style="right:1592.41px;top:659px;font-size:17.3px;letter-spacing:1.09px;">(14%)</span>
<span class="T i" style="right:1455.41px;top:659px;font-size:17.3px;letter-spacing:1.09px;">(14%)</span>
<span class="T i" style="right:1318.41px;top:659px;font-size:17.3px;letter-spacing:1.09px;">(14%)</span>
<span class="T i" style="right:1181.41px;top:659px;font-size:17.3px;letter-spacing:1.09px;">(14%)</span>
<span class="T i" style="right:1044.41px;top:659px;font-size:17.3px;letter-spacing:1.09px;">(14%)</span>
<span class="T i" style="right:907.41px;top:659px;font-size:17.3px;letter-spacing:1.09px;">(14%)</span>
<span class="T i" style="right:770.41px;top:659px;font-size:17.3px;letter-spacing:1.09px;">(14%)</span>
<span class="T i" style="right:633.41px;top:659px;font-size:17.3px;letter-spacing:1.09px;">(14%)</span>
<span class="T i" style="right:496.41px;top:659px;font-size:17.3px;letter-spacing:1.09px;">(14%)</span>
<span class="T i" style="right:359.41px;top:659px;font-size:17.3px;letter-spacing:1.09px;">(14%)</span>
<span class="T i" style="right:222.41px;top:659px;font-size:17.3px;letter-spacing:1.09px;">(14%)</span>
<span class="T i" style="right:85.41px;top:659px;font-size:17.3px;letter-spacing:1.09px;">(14%)</span>
<div style="left:70px;top:677px;width:1075px;height:27px;background:#4bb1e6;"></div>
<div style="left:1175.4px;top:677px;width:1644.6px;height:27px;background:#4bb1e6;"></div>
<span class="T b" style="left:84.2px;top:682px;font-size:20.7px;color:#fff;letter-spacing:-0.02px;">Contribution Margin</span>
<span class="T b" style="right:2248.27px;top:683px;font-size:17.3px;color:#fff;letter-spacing:0.13px;">22,303</span>
<span class="T b" style="right:2128.27px;top:683px;font-size:17.3px;color:#fff;letter-spacing:0.13px;">27,316</span>
<span class="T b" style="right:2008.27px;top:683px;font-size:17.3px;color:#fff;letter-spacing:0.13px;">32,766</span>
<span class="T b" style="right:1888.27px;top:683px;font-size:17.3px;color:#fff;letter-spacing:0.13px;">37,944</span>
<span class="T b" style="right:1768.27px;top:683px;font-size:17.3px;color:#fff;letter-spacing:0.13px;">42,777</span>
<span class="T b" style="right:1600.28px;top:683px;font-size:17.3px;color:#fff;letter-spacing:0.12px;">1,898</span>
<span class="T b" style="right:1463.28px;top:683px;font-size:17.3px;color:#fff;letter-spacing:0.12px;">1,719</span>
<span class="T b" style="right:1326.28px;top:683px;font-size:17.3px;color:#fff;letter-spacing:0.12px;">1,898</span>
<span class="T b" style="right:1189.28px;top:683px;font-size:17.3px;color:#fff;letter-spacing:0.12px;">1,816</span>
<span class="T b" style="right:1052.28px;top:683px;font-size:17.3px;color:#fff;letter-spacing:0.12px;">1,931</span>
<span class="T b" style="right:915.28px;top:683px;font-size:17.3px;color:#fff;letter-spacing:0.12px;">1,816</span>
<span class="T b" style="right:778.28px;top:683px;font-size:17.3px;color:#fff;letter-spacing:0.12px;">1,865</span>
<span class="T b" style="right:641.28px;top:683px;font-size:17.3px;color:#fff;letter-spacing:0.12px;">1,931</span>
<span class="T b" style="right:504.28px;top:683px;font-size:17.3px;color:#fff;letter-spacing:0.12px;">1,816</span>
<span class="T b" style="right:367.28px;top:683px;font-size:17.3px;color:#fff;letter-spacing:0.12px;">1,898</span>
<span class="T b" style="right:230.28px;top:683px;font-size:17.3px;color:#fff;letter-spacing:0.12px;">1,849</span>
<span class="T b" style="right:93.28px;top:683px;font-size:17.3px;color:#fff;letter-spacing:0.12px;">1,865</span>
<span class="T i" style="left:91.9px;top:708px;font-size:17.3px;letter-spacing:0.32px;">Contribution Margin %</span>
<span class="T i" style="right:2248.23px;top:708px;font-size:17.3px;letter-spacing:1.17px;">83%</span>
<span class="T i" style="right:2128.23px;top:708px;font-size:17.3px;letter-spacing:1.17px;">83%</span>
<span class="T i" style="right:2008.23px;top:708px;font-size:17.3px;letter-spacing:1.17px;">84%</span>
<span class="T i" style="right:1888.23px;top:708px;font-size:17.3px;letter-spacing:1.17px;">85%</span>
<span class="T i" style="right:1768.23px;top:708px;font-size:17.3px;letter-spacing:1.17px;">85%</span>
<span class="T i" style="right:1600.23px;top:708px;font-size:17.3px;letter-spacing:1.17px;">83%</span>
<span class="T i" style="right:1463.23px;top:708px;font-size:17.3px;letter-spacing:1.17px;">83%</span>
<span class="T i" style="right:1326.23px;top:708px;font-size:17.3px;letter-spacing:1.17px;">83%</span>
<span class="T i" style="right:1189.23px;top:708px;font-size:17.3px;letter-spacing:1.17px;">83%</span>
<span class="T i" style="right:1052.23px;top:708px;font-size:17.3px;letter-spacing:1.17px;">83%</span>
<span class="T i" style="right:915.23px;top:708px;font-size:17.3px;letter-spacing:1.17px;">83%</span>
<span class="T i" style="right:778.23px;top:708px;font-size:17.3px;letter-spacing:1.17px;">83%</span>
<span class="T i" style="right:641.23px;top:708px;font-size:17.3px;letter-spacing:1.17px;">83%</span>
<span class="T i" style="right:504.23px;top:708px;font-size:17.3px;letter-spacing:1.17px;">83%</span>
<span class="T i" style="right:367.23px;top:708px;font-size:17.3px;letter-spacing:1.17px;">83%</span>
<span class="T i" style="right:230.23px;top:708px;font-size:17.3px;letter-spacing:1.17px;">83%</span>
<span class="T i" style="right:93.23px;top:708px;font-size:17.3px;letter-spacing:1.17px;">83%</span>
<span class="T" style="left:73.6px;top:731px;font-size:17.3px;letter-spacing:0.09px;">Payroll Expenses</span>
<span class="T" style="right:2240.74px;top:731px;font-size:17.3px;letter-spacing:0.46px;">(9,945)</span>
<span class="T" style="right:2120.78px;top:731px;font-size:17.3px;letter-spacing:0.42px;">(11,403)</span>
<span class="T" style="right:2000.78px;top:731px;font-size:17.3px;letter-spacing:0.42px;">(12,940)</span>
<span class="T" style="right:1880.78px;top:731px;font-size:17.3px;letter-spacing:0.42px;">(14,558)</span>
<span class="T" style="right:1760.78px;top:731px;font-size:17.3px;letter-spacing:0.42px;">(16,263)</span>
<span class="T" style="right:1592.72px;top:731px;font-size:17.3px;letter-spacing:0.48px;">(829)</span>
<span class="T" style="right:1455.72px;top:731px;font-size:17.3px;letter-spacing:0.48px;">(829)</span>
<span class="T" style="right:1318.72px;top:731px;font-size:17.3px;letter-spacing:0.48px;">(829)</span>
<span class="T" style="right:1181.72px;top:731px;font-size:17.3px;letter-spacing:0.48px;">(829)</span>
<span class="T" style="right:1044.72px;top:731px;font-size:17.3px;letter-spacing:0.48px;">(829)</span>
<span class="T" style="right:907.72px;top:731px;font-size:17.3px;letter-spacing:0.48px;">(829)</span>
<span class="T" style="right:770.72px;top:731px;font-size:17.3px;letter-spacing:0.48px;">(829)</span>
<span class="T" style="right:633.72px;top:731px;font-size:17.3px;letter-spacing:0.48px;">(829)</span>
<span class="T" style="right:496.72px;top:731px;font-size:17.3px;letter-spacing:0.48px;">(829)</span>
<span class="T" style="right:359.72px;top:731px;font-size:17.3px;letter-spacing:0.48px;">(829)</span>
<span class="T" style="right:222.72px;top:731px;font-size:17.3px;letter-spacing:0.48px;">(829)</span>
<span class="T" style="right:85.72px;top:731px;font-size:17.3px;letter-spacing:0.48px;">(829)</span>
<span class="T i" style="left:92.9px;top:754px;font-size:17.3px;letter-spacing:0.5px;">% of Revenue</span>
<span class="T i" style="right:2240.41px;top:754px;font-size:17.3px;letter-spacing:1.09px;">(37%)</span>
<span class="T i" style="right:2120.41px;top:754px;font-size:17.3px;letter-spacing:1.09px;">(35%)</span>
<span class="T i" style="right:2000.41px;top:754px;font-size:17.3px;letter-spacing:1.09px;">(33%)</span>
<span class="T i" style="right:1880.41px;top:754px;font-size:17.3px;letter-spacing:1.09px;">(32%)</span>
<span class="T i" style="right:1760.41px;top:754px;font-size:17.3px;letter-spacing:1.09px;">(32%)</span>
<span class="T i" style="right:1592.41px;top:754px;font-size:17.3px;letter-spacing:1.09px;">(36%)</span>
<span class="T i" style="right:1455.41px;top:754px;font-size:17.3px;letter-spacing:1.09px;">(40%)</span>
<span class="T i" style="right:1318.41px;top:754px;font-size:17.3px;letter-spacing:1.09px;">(36%)</span>
<span class="T i" style="right:1181.41px;top:754px;font-size:17.3px;letter-spacing:1.09px;">(38%)</span>
<span class="T i" style="right:1044.41px;top:754px;font-size:17.3px;letter-spacing:1.09px;">(35%)</span>
<span class="T i" style="right:907.41px;top:754px;font-size:17.3px;letter-spacing:1.09px;">(38%)</span>
<span class="T i" style="right:770.41px;top:754px;font-size:17.3px;letter-spacing:1.09px;">(37%)</span>
<span class="T i" style="right:633.41px;top:754px;font-size:17.3px;letter-spacing:1.09px;">(35%)</span>
<span class="T i" style="right:496.41px;top:754px;font-size:17.3px;letter-spacing:1.09px;">(38%)</span>
<span class="T i" style="right:359.41px;top:754px;font-size:17.3px;letter-spacing:1.09px;">(36%)</span>
<span class="T i" style="right:222.41px;top:754px;font-size:17.3px;letter-spacing:1.09px;">(37%)</span>
<span class="T i" style="right:85.41px;top:754px;font-size:17.3px;letter-spacing:1.09px;">(37%)</span>
<span class="T" style="left:73.6px;top:781px;font-size:17.3px;letter-spacing:0.12px;">Fixed Expenses</span>
<span class="T" style="right:2248.05px;top:781px;font-size:17.3px;letter-spacing:1.05px;">-</span>
<span class="T" style="right:2128.05px;top:781px;font-size:17.3px;letter-spacing:1.05px;">-</span>
<span class="T" style="right:2008.05px;top:781px;font-size:17.3px;letter-spacing:1.05px;">-</span>
<span class="T" style="right:1888.05px;top:781px;font-size:17.3px;letter-spacing:1.05px;">-</span>
<span class="T" style="right:1768.05px;top:781px;font-size:17.3px;letter-spacing:1.05px;">-</span>
<span class="T" style="right:1600.05px;top:781px;font-size:17.3px;letter-spacing:1.05px;">-</span>
<span class="T" style="right:1463.05px;top:781px;font-size:17.3px;letter-spacing:1.05px;">-</span>
<span class="T" style="right:1326.05px;top:781px;font-size:17.3px;letter-spacing:1.05px;">-</span>
<span class="T" style="right:1189.05px;top:781px;font-size:17.3px;letter-spacing:1.05px;">-</span>
<span class="T" style="right:1052.05px;top:781px;font-size:17.3px;letter-spacing:1.05px;">-</span>
<span class="T" style="right:915.05px;top:781px;font-size:17.3px;letter-spacing:1.05px;">-</span>
<span class="T" style="right:778.05px;top:781px;font-size:17.3px;letter-spacing:1.05px;">-</span>
<span class="T" style="right:641.05px;top:781px;font-size:17.3px;letter-spacing:1.05px;">-</span>
<span class="T" style="right:504.05px;top:781px;font-size:17.3px;letter-spacing:1.05px;">-</span>
<span class="T" style="right:367.05px;top:781px;font-size:17.3px;letter-spacing:1.05px;">-</span>
<span class="T" style="right:230.05px;top:781px;font-size:17.3px;letter-spacing:1.05px;">-</span>
<span class="T" style="right:93.05px;top:781px;font-size:17.3px;letter-spacing:1.05px;">-</span>
<span class="T i" style="left:92.9px;top:804px;font-size:17.3px;letter-spacing:0.5px;">% of Revenue</span>
<span class="T i" style="right:2248.05px;top:804px;font-size:17.3px;letter-spacing:1.05px;">-</span>
<span class="T i" style="right:2128.05px;top:804px;font-size:17.3px;letter-spacing:1.05px;">-</span>
<span class="T i" style="right:2008.05px;top:804px;font-size:17.3px;letter-spacing:1.05px;">-</span>
<span class="T i" style="right:1888.05px;top:804px;font-size:17.3px;letter-spacing:1.05px;">-</span>
<span class="T i" style="right:1768.05px;top:804px;font-size:17.3px;letter-spacing:1.05px;">-</span>
<span class="T i" style="right:1600.05px;top:804px;font-size:17.3px;letter-spacing:1.05px;">-</span>
<span class="T i" style="right:1463.05px;top:804px;font-size:17.3px;letter-spacing:1.05px;">-</span>
<span class="T i" style="right:1326.05px;top:804px;font-size:17.3px;letter-spacing:1.05px;">-</span>
<span class="T i" style="right:1189.05px;top:804px;font-size:17.3px;letter-spacing:1.05px;">-</span>
<span class="T i" style="right:1052.05px;top:804px;font-size:17.3px;letter-spacing:1.05px;">-</span>
<span class="T i" style="right:915.05px;top:804px;font-size:17.3px;letter-spacing:1.05px;">-</span>
<span class="T i" style="right:778.05px;top:804px;font-size:17.3px;letter-spacing:1.05px;">-</span>
<span class="T i" style="right:641.05px;top:804px;font-size:17.3px;letter-spacing:1.05px;">-</span>
<span class="T i" style="right:504.05px;top:804px;font-size:17.3px;letter-spacing:1.05px;">-</span>
<span class="T i" style="right:367.05px;top:804px;font-size:17.3px;letter-spacing:1.05px;">-</span>
<span class="T i" style="right:230.05px;top:804px;font-size:17.3px;letter-spacing:1.05px;">-</span>
<span class="T i" style="right:93.05px;top:804px;font-size:17.3px;letter-spacing:1.05px;">-</span>
<div style="left:70px;top:828px;width:1075px;height:27px;background:#4bb1e6;"></div>
<div style="left:1175.4px;top:828px;width:1644.6px;height:27px;background:#4bb1e6;"></div>
<span class="T b" style="left:84.2px;top:833px;font-size:20.7px;color:#fff;letter-spacing:0.92px;">EBITDA</span>
<span class="T b" style="right:2248.27px;top:834px;font-size:17.3px;color:#fff;letter-spacing:0.13px;">12,358</span>
<span class="T b" style="right:2128.27px;top:834px;font-size:17.3px;color:#fff;letter-spacing:0.13px;">15,913</span>
<span class="T b" style="right:2008.27px;top:834px;font-size:17.3px;color:#fff;letter-spacing:0.13px;">19,826</span>
<span class="T b" style="right:1888.27px;top:834px;font-size:17.3px;color:#fff;letter-spacing:0.13px;">23,386</span>
<span class="T b" style="right:1768.27px;top:834px;font-size:17.3px;color:#fff;letter-spacing:0.13px;">26,515</span>
<span class="T b" style="right:1600.28px;top:834px;font-size:17.3px;color:#fff;letter-spacing:0.12px;">1,069</span>
<span class="T b" style="right:1463.21px;top:834px;font-size:17.3px;color:#fff;letter-spacing:0.19px;">890</span>
<span class="T b" style="right:1326.28px;top:834px;font-size:17.3px;color:#fff;letter-spacing:0.12px;">1,069</span>
<span class="T b" style="right:1189.21px;top:834px;font-size:17.3px;color:#fff;letter-spacing:0.19px;">988</span>
<span class="T b" style="right:1052.28px;top:834px;font-size:17.3px;color:#fff;letter-spacing:0.12px;">1,102</span>
<span class="T b" style="right:915.21px;top:834px;font-size:17.3px;color:#fff;letter-spacing:0.19px;">988</span>
<span class="T b" style="right:778.28px;top:834px;font-size:17.3px;color:#fff;letter-spacing:0.12px;">1,036</span>
<span class="T b" style="right:641.28px;top:834px;font-size:17.3px;color:#fff;letter-spacing:0.12px;">1,102</span>
<span class="T b" style="right:504.21px;top:834px;font-size:17.3px;color:#fff;letter-spacing:0.19px;">988</span>
<span class="T b" style="right:367.28px;top:834px;font-size:17.3px;color:#fff;letter-spacing:0.12px;">1,069</span>
<span class="T b" style="right:230.28px;top:834px;font-size:17.3px;color:#fff;letter-spacing:0.12px;">1,020</span>
<span class="T b" style="right:93.28px;top:834px;font-size:17.3px;color:#fff;letter-spacing:0.12px;">1,036</span>
<span class="T i" style="left:73.4px;top:859px;font-size:17.3px;letter-spacing:1.48px;">EBITDA %</span>
<span class="T i" style="right:2248.23px;top:859px;font-size:17.3px;letter-spacing:1.17px;">46%</span>
<span class="T i" style="right:2128.23px;top:859px;font-size:17.3px;letter-spacing:1.17px;">48%</span>
<span class="T i" style="right:2008.23px;top:859px;font-size:17.3px;letter-spacing:1.17px;">51%</span>
<span class="T i" style="right:1888.23px;top:859px;font-size:17.3px;letter-spacing:1.17px;">52%</span>
<span class="T i" style="right:1768.23px;top:859px;font-size:17.3px;letter-spacing:1.17px;">53%</span>
<span class="T i" style="right:1600.23px;top:859px;font-size:17.3px;letter-spacing:1.17px;">46%</span>
<span class="T i" style="right:1463.23px;top:859px;font-size:17.3px;letter-spacing:1.17px;">43%</span>
<span class="T i" style="right:1326.23px;top:859px;font-size:17.3px;letter-spacing:1.17px;">46%</span>
<span class="T i" style="right:1189.23px;top:859px;font-size:17.3px;letter-spacing:1.17px;">45%</span>
<span class="T i" style="right:1052.23px;top:859px;font-size:17.3px;letter-spacing:1.17px;">47%</span>
<span class="T i" style="right:915.23px;top:859px;font-size:17.3px;letter-spacing:1.17px;">45%</span>
<span class="T i" style="right:778.23px;top:859px;font-size:17.3px;letter-spacing:1.17px;">46%</span>
<span class="T i" style="right:641.23px;top:859px;font-size:17.3px;letter-spacing:1.17px;">47%</span>
<span class="T i" style="right:504.23px;top:859px;font-size:17.3px;letter-spacing:1.17px;">45%</span>
<span class="T i" style="right:367.23px;top:859px;font-size:17.3px;letter-spacing:1.17px;">46%</span>
<span class="T i" style="right:230.23px;top:859px;font-size:17.3px;letter-spacing:1.17px;">46%</span>
<span class="T i" style="right:93.23px;top:859px;font-size:17.3px;letter-spacing:1.17px;">46%</span>
<span class="T" style="left:73.6px;top:882px;font-size:17.3px;letter-spacing:0px;">Depreciation &amp; Amortization</span>
<span class="T" style="right:2240.74px;top:882px;font-size:17.3px;letter-spacing:0.46px;">(2,923)</span>
<span class="T" style="right:2120.74px;top:882px;font-size:17.3px;letter-spacing:0.46px;">(3,700)</span>
<span class="T" style="right:2000.74px;top:882px;font-size:17.3px;letter-spacing:0.46px;">(3,700)</span>
<span class="T" style="right:1880.74px;top:882px;font-size:17.3px;letter-spacing:0.46px;">(3,700)</span>
<span class="T" style="right:1760.74px;top:882px;font-size:17.3px;letter-spacing:0.46px;">(3,700)</span>
<span class="T" style="right:1592.63px;top:882px;font-size:17.3px;letter-spacing:0.57px;">(54)</span>
<span class="T" style="right:1455.72px;top:882px;font-size:17.3px;letter-spacing:0.48px;">(107)</span>
<span class="T" style="right:1318.72px;top:882px;font-size:17.3px;letter-spacing:0.48px;">(161)</span>
<span class="T" style="right:1181.72px;top:882px;font-size:17.3px;letter-spacing:0.48px;">(209)</span>
<span class="T" style="right:1044.72px;top:882px;font-size:17.3px;letter-spacing:0.48px;">(254)</span>
<span class="T" style="right:907.72px;top:882px;font-size:17.3px;letter-spacing:0.48px;">(294)</span>
<span class="T" style="right:770.72px;top:882px;font-size:17.3px;letter-spacing:0.48px;">(302)</span>
<span class="T" style="right:633.72px;top:882px;font-size:17.3px;letter-spacing:0.48px;">(307)</span>
<span class="T" style="right:496.72px;top:882px;font-size:17.3px;letter-spacing:0.48px;">(308)</span>
<span class="T" style="right:359.72px;top:882px;font-size:17.3px;letter-spacing:0.48px;">(308)</span>
<span class="T" style="right:222.72px;top:882px;font-size:17.3px;letter-spacing:0.48px;">(308)</span>
<span class="T" style="right:85.72px;top:882px;font-size:17.3px;letter-spacing:0.48px;">(308)</span>
<span class="T" style="left:73.6px;top:905px;font-size:17.3px;letter-spacing:1.23px;">EBIT</span>
<span class="T" style="right:2248.15px;top:905px;font-size:17.3px;letter-spacing:0.25px;">9,435</span>
<span class="T" style="right:2128.16px;top:905px;font-size:17.3px;letter-spacing:0.24px;">12,213</span>
<span class="T" style="right:2008.16px;top:905px;font-size:17.3px;letter-spacing:0.24px;">16,126</span>
<span class="T" style="right:1888.16px;top:905px;font-size:17.3px;letter-spacing:0.24px;">19,686</span>
<span class="T" style="right:1768.16px;top:905px;font-size:17.3px;letter-spacing:0.24px;">22,815</span>
<span class="T" style="right:1600.15px;top:905px;font-size:17.3px;letter-spacing:0.25px;">1,016</span>
<span class="T" style="right:1463.24px;top:905px;font-size:17.3px;letter-spacing:0.16px;">783</span>
<span class="T" style="right:1326.24px;top:905px;font-size:17.3px;letter-spacing:0.16px;">908</span>
<span class="T" style="right:1189.24px;top:905px;font-size:17.3px;letter-spacing:0.16px;">778</span>
<span class="T" style="right:1052.24px;top:905px;font-size:17.3px;letter-spacing:0.16px;">848</span>
<span class="T" style="right:915.24px;top:905px;font-size:17.3px;letter-spacing:0.16px;">693</span>
<span class="T" style="right:778.24px;top:905px;font-size:17.3px;letter-spacing:0.16px;">734</span>
<span class="T" style="right:641.24px;top:905px;font-size:17.3px;letter-spacing:0.16px;">795</span>
<span class="T" style="right:504.24px;top:905px;font-size:17.3px;letter-spacing:0.16px;">679</span>
<span class="T" style="right:367.24px;top:905px;font-size:17.3px;letter-spacing:0.16px;">761</span>
<span class="T" style="right:230.24px;top:905px;font-size:17.3px;letter-spacing:0.16px;">712</span>
<span class="T" style="right:93.24px;top:905px;font-size:17.3px;letter-spacing:0.16px;">728</span>
<span class="T" style="left:73.6px;top:928px;font-size:17.3px;letter-spacing:0.15px;">Net Interest Expense</span>
<span class="T" style="right:2240.63px;top:928px;font-size:17.3px;letter-spacing:0.57px;">(18)</span>
<span class="T" style="right:2120.63px;top:928px;font-size:17.3px;letter-spacing:0.57px;">(17)</span>
<span class="T" style="right:2000.63px;top:928px;font-size:17.3px;letter-spacing:0.57px;">(14)</span>
<span class="T" style="right:1880.63px;top:928px;font-size:17.3px;letter-spacing:0.57px;">(11)</span>
<span class="T" style="right:1760.5px;top:928px;font-size:17.3px;letter-spacing:0.7px;">(7)</span>
<span class="T" style="right:1592.5px;top:928px;font-size:17.3px;letter-spacing:0.7px;">(1)</span>
<span class="T" style="right:1455.5px;top:928px;font-size:17.3px;letter-spacing:0.7px;">(1)</span>
<span class="T" style="right:1318.5px;top:928px;font-size:17.3px;letter-spacing:0.7px;">(2)</span>
<span class="T" style="right:1181.5px;top:928px;font-size:17.3px;letter-spacing:0.7px;">(2)</span>
<span class="T" style="right:1044.5px;top:928px;font-size:17.3px;letter-spacing:0.7px;">(2)</span>
<span class="T" style="right:907.5px;top:928px;font-size:17.3px;letter-spacing:0.7px;">(2)</span>
<span class="T" style="right:770.5px;top:928px;font-size:17.3px;letter-spacing:0.7px;">(2)</span>
<span class="T" style="right:633.5px;top:928px;font-size:17.3px;letter-spacing:0.7px;">(2)</span>
<span class="T" style="right:496.5px;top:928px;font-size:17.3px;letter-spacing:0.7px;">(2)</span>
<span class="T" style="right:359.5px;top:928px;font-size:17.3px;letter-spacing:0.7px;">(2)</span>
<span class="T" style="right:222.5px;top:928px;font-size:17.3px;letter-spacing:0.7px;">(2)</span>
<span class="T" style="right:85.5px;top:928px;font-size:17.3px;letter-spacing:0.7px;">(2)</span>
<span class="T" style="left:73.6px;top:951px;font-size:17.3px;letter-spacing:0.45px;">Net Profit Before Tax</span>
<span class="T" style="right:2248.15px;top:951px;font-size:17.3px;letter-spacing:0.25px;">9,417</span>
<span class="T" style="right:2128.16px;top:951px;font-size:17.3px;letter-spacing:0.24px;">12,196</span>
<span class="T" style="right:2008.16px;top:951px;font-size:17.3px;letter-spacing:0.24px;">16,112</span>
<span class="T" style="right:1888.16px;top:951px;font-size:17.3px;letter-spacing:0.24px;">19,675</span>
<span class="T" style="right:1768.16px;top:951px;font-size:17.3px;letter-spacing:0.24px;">22,807</span>
<span class="T" style="right:1600.15px;top:951px;font-size:17.3px;letter-spacing:0.25px;">1,015</span>
<span class="T" style="right:1463.24px;top:951px;font-size:17.3px;letter-spacing:0.16px;">782</span>
<span class="T" style="right:1326.24px;top:951px;font-size:17.3px;letter-spacing:0.16px;">906</span>
<span class="T" style="right:1189.24px;top:951px;font-size:17.3px;letter-spacing:0.16px;">777</span>
<span class="T" style="right:1052.24px;top:951px;font-size:17.3px;letter-spacing:0.16px;">846</span>
<span class="T" style="right:915.24px;top:951px;font-size:17.3px;letter-spacing:0.16px;">692</span>
<span class="T" style="right:778.24px;top:951px;font-size:17.3px;letter-spacing:0.16px;">733</span>
<span class="T" style="right:641.24px;top:951px;font-size:17.3px;letter-spacing:0.16px;">793</span>
<span class="T" style="right:504.24px;top:951px;font-size:17.3px;letter-spacing:0.16px;">678</span>
<span class="T" style="right:367.24px;top:951px;font-size:17.3px;letter-spacing:0.16px;">759</span>
<span class="T" style="right:230.24px;top:951px;font-size:17.3px;letter-spacing:0.16px;">710</span>
<span class="T" style="right:93.24px;top:951px;font-size:17.3px;letter-spacing:0.16px;">727</span>
<span class="T" style="left:73.6px;top:974px;font-size:17.3px;letter-spacing:0.42px;">Tax Expense</span>
<span class="T" style="right:2240.74px;top:974px;font-size:17.3px;letter-spacing:0.46px;">(2,354)</span>
<span class="T" style="right:2120.74px;top:974px;font-size:17.3px;letter-spacing:0.46px;">(3,049)</span>
<span class="T" style="right:2000.74px;top:974px;font-size:17.3px;letter-spacing:0.46px;">(4,028)</span>
<span class="T" style="right:1880.74px;top:974px;font-size:17.3px;letter-spacing:0.46px;">(4,919)</span>
<span class="T" style="right:1760.74px;top:974px;font-size:17.3px;letter-spacing:0.46px;">(5,702)</span>
<span class="T" style="right:1592.72px;top:974px;font-size:17.3px;letter-spacing:0.48px;">(254)</span>
<span class="T" style="right:1455.72px;top:974px;font-size:17.3px;letter-spacing:0.48px;">(195)</span>
<span class="T" style="right:1318.72px;top:974px;font-size:17.3px;letter-spacing:0.48px;">(227)</span>
<span class="T" style="right:1181.72px;top:974px;font-size:17.3px;letter-spacing:0.48px;">(194)</span>
<span class="T" style="right:1044.72px;top:974px;font-size:17.3px;letter-spacing:0.48px;">(212)</span>
<span class="T" style="right:907.72px;top:974px;font-size:17.3px;letter-spacing:0.48px;">(173)</span>
<span class="T" style="right:770.72px;top:974px;font-size:17.3px;letter-spacing:0.48px;">(183)</span>
<span class="T" style="right:633.72px;top:974px;font-size:17.3px;letter-spacing:0.48px;">(198)</span>
<span class="T" style="right:496.72px;top:974px;font-size:17.3px;letter-spacing:0.48px;">(169)</span>
<span class="T" style="right:359.72px;top:974px;font-size:17.3px;letter-spacing:0.48px;">(190)</span>
<span class="T" style="right:222.72px;top:974px;font-size:17.3px;letter-spacing:0.48px;">(178)</span>
<span class="T" style="right:85.72px;top:974px;font-size:17.3px;letter-spacing:0.48px;">(182)</span>
<div style="left:70px;top:992px;width:1075px;height:27px;background:#4bb1e6;"></div>
<div style="left:1175.4px;top:992px;width:1644.6px;height:27px;background:#4bb1e6;"></div>
<span class="T b" style="left:84.2px;top:997px;font-size:20.7px;color:#fff;letter-spacing:0.2px;">Net Profit After Tax</span>
<span class="T b" style="right:2248.28px;top:998px;font-size:17.3px;color:#fff;letter-spacing:0.12px;">7,063</span>
<span class="T b" style="right:2128.28px;top:998px;font-size:17.3px;color:#fff;letter-spacing:0.12px;">9,147</span>
<span class="T b" style="right:2008.27px;top:998px;font-size:17.3px;color:#fff;letter-spacing:0.13px;">12,084</span>
<span class="T b" style="right:1888.27px;top:998px;font-size:17.3px;color:#fff;letter-spacing:0.13px;">14,756</span>
<span class="T b" style="right:1768.27px;top:998px;font-size:17.3px;color:#fff;letter-spacing:0.13px;">17,105</span>
<span class="T b" style="right:1600.21px;top:998px;font-size:17.3px;color:#fff;letter-spacing:0.19px;">761</span>
<span class="T b" style="right:1463.21px;top:998px;font-size:17.3px;color:#fff;letter-spacing:0.19px;">586</span>
<span class="T b" style="right:1326.21px;top:998px;font-size:17.3px;color:#fff;letter-spacing:0.19px;">680</span>
<span class="T b" style="right:1189.21px;top:998px;font-size:17.3px;color:#fff;letter-spacing:0.19px;">583</span>
<span class="T b" style="right:1052.21px;top:998px;font-size:17.3px;color:#fff;letter-spacing:0.19px;">635</span>
<span class="T b" style="right:915.21px;top:998px;font-size:17.3px;color:#fff;letter-spacing:0.19px;">519</span>
<span class="T b" style="right:778.21px;top:998px;font-size:17.3px;color:#fff;letter-spacing:0.19px;">549</span>
<span class="T b" style="right:641.21px;top:998px;font-size:17.3px;color:#fff;letter-spacing:0.19px;">595</span>
<span class="T b" style="right:504.21px;top:998px;font-size:17.3px;color:#fff;letter-spacing:0.19px;">508</span>
<span class="T b" style="right:367.21px;top:998px;font-size:17.3px;color:#fff;letter-spacing:0.19px;">569</span>
<span class="T b" style="right:230.21px;top:998px;font-size:17.3px;color:#fff;letter-spacing:0.19px;">533</span>
<span class="T b" style="right:93.21px;top:998px;font-size:17.3px;color:#fff;letter-spacing:0.19px;">545</span>
<span class="T i" style="left:91.9px;top:1023px;font-size:17.3px;letter-spacing:0.5px;">Net Profit After Tax %</span>
<span class="T i" style="right:2248.23px;top:1023px;font-size:17.3px;letter-spacing:1.17px;">26%</span>
<span class="T i" style="right:2128.23px;top:1023px;font-size:17.3px;letter-spacing:1.17px;">28%</span>
<span class="T i" style="right:2008.23px;top:1023px;font-size:17.3px;letter-spacing:1.17px;">31%</span>
<span class="T i" style="right:1888.23px;top:1023px;font-size:17.3px;letter-spacing:1.17px;">33%</span>
<span class="T i" style="right:1768.23px;top:1023px;font-size:17.3px;letter-spacing:1.17px;">34%</span>
<span class="T i" style="right:1600.23px;top:1023px;font-size:17.3px;letter-spacing:1.17px;">33%</span>
<span class="T i" style="right:1463.23px;top:1023px;font-size:17.3px;letter-spacing:1.17px;">28%</span>
<span class="T i" style="right:1326.23px;top:1023px;font-size:17.3px;letter-spacing:1.17px;">30%</span>
<span class="T i" style="right:1189.23px;top:1023px;font-size:17.3px;letter-spacing:1.17px;">26%</span>
<span class="T i" style="right:1052.23px;top:1023px;font-size:17.3px;letter-spacing:1.17px;">27%</span>
<span class="T i" style="right:915.23px;top:1023px;font-size:17.3px;letter-spacing:1.17px;">24%</span>
<span class="T i" style="right:778.23px;top:1023px;font-size:17.3px;letter-spacing:1.17px;">24%</span>
<span class="T i" style="right:641.23px;top:1023px;font-size:17.3px;letter-spacing:1.17px;">25%</span>
<span class="T i" style="right:504.23px;top:1023px;font-size:17.3px;letter-spacing:1.17px;">23%</span>
<span class="T i" style="right:367.23px;top:1023px;font-size:17.3px;letter-spacing:1.17px;">25%</span>
<span class="T i" style="right:230.23px;top:1023px;font-size:17.3px;letter-spacing:1.17px;">24%</span>
<span class="T i" style="right:93.23px;top:1023px;font-size:17.3px;letter-spacing:1.17px;">24%</span>
<div style="left:70px;top:1065.3px;width:1075px;height:35.7px;background:#4b4fd1;"></div>
<span class="D b" style="left:7.34px;width:1200px;text-align:center;top:1071px;font-size:26px;color:#fff;letter-spacing:-0.32px;">Income Statement ($'000) - 5 years to December 2030</span>
<div style="left:1175.4px;top:1065.3px;width:1644.6px;height:35.7px;background:#4b4fd1;"></div>
<span class="D b" style="left:1397.67px;width:1200px;text-align:center;top:1071px;font-size:26px;color:#fff;letter-spacing:-0.07px;">Income Statement ($'000) - 2026</span>
<div style="left:70px;top:1561.1px;width:1075px;height:35.5px;background:#4b4fd1;"></div>
<span class="D b" style="left:7.28px;width:1200px;text-align:center;top:1567px;font-size:26px;color:#fff;letter-spacing:-0.44px;">Balance Sheet ($'000) - 5 years to December 2030</span>
<div style="left:1175.4px;top:1561.1px;width:1644.6px;height:35.5px;background:#4b4fd1;"></div>
<span class="D b" style="left:1397.58px;width:1200px;text-align:center;top:1567px;font-size:26px;color:#fff;letter-spacing:-0.24px;">Balance Sheet ($'000) - 2026</span>
<div style="left:71px;top:1602.3px;width:472.7px;height:21.6px;background:#6f74e8;"></div>
<span class="T b" style="left:81.8px;top:1606px;font-size:17.3px;color:#fff;letter-spacing:0.58px;">Year Ending</span>
<div style="left:545.4px;top:1602.3px;width:118.4px;height:21.6px;background:#6f74e8;"></div>
<span class="T b" style="left:5.11px;width:1200px;text-align:center;top:1606px;font-size:17.3px;color:#fff;letter-spacing:0.23px;">2026</span>
<div style="left:665.4px;top:1602.3px;width:118.4px;height:21.6px;background:#6f74e8;"></div>
<span class="T b" style="left:125.11px;width:1200px;text-align:center;top:1606px;font-size:17.3px;color:#fff;letter-spacing:0.23px;">2027</span>
<div style="left:785.4px;top:1602.3px;width:118.4px;height:21.6px;background:#6f74e8;"></div>
<span class="T b" style="left:245.11px;width:1200px;text-align:center;top:1606px;font-size:17.3px;color:#fff;letter-spacing:0.23px;">2028</span>
<div style="left:905.4px;top:1602.3px;width:118.4px;height:21.6px;background:#6f74e8;"></div>
<span class="T b" style="left:365.11px;width:1200px;text-align:center;top:1606px;font-size:17.3px;color:#fff;letter-spacing:0.23px;">2029</span>
<div style="left:1025.4px;top:1602.3px;width:118.4px;height:21.6px;background:#6f74e8;"></div>
<span class="T b" style="left:485.11px;width:1200px;text-align:center;top:1606px;font-size:17.3px;color:#fff;letter-spacing:0.23px;">2030</span>
<div style="left:1176.4px;top:1602.3px;width:135.4px;height:21.6px;background:#6f74e8;"></div>
<span class="T b" style="left:644.25px;width:1200px;text-align:center;top:1606px;font-size:17.3px;color:#fff;letter-spacing:0.3px;">Jan</span>
<div style="left:1313.4px;top:1602.3px;width:135.4px;height:21.6px;background:#6f74e8;"></div>
<span class="T b" style="left:781.25px;width:1200px;text-align:center;top:1606px;font-size:17.3px;color:#fff;letter-spacing:0.3px;">Feb</span>
<div style="left:1450.4px;top:1602.3px;width:135.4px;height:21.6px;background:#6f74e8;"></div>
<span class="T b" style="left:918.25px;width:1200px;text-align:center;top:1606px;font-size:17.3px;color:#fff;letter-spacing:0.3px;">Mar</span>
<div style="left:1587.4px;top:1602.3px;width:135.4px;height:21.6px;background:#6f74e8;"></div>
<span class="T b" style="left:1055.25px;width:1200px;text-align:center;top:1606px;font-size:17.3px;color:#fff;letter-spacing:0.3px;">Apr</span>
<div style="left:1724.4px;top:1602.3px;width:135.4px;height:21.6px;background:#6f74e8;"></div>
<span class="T b" style="left:1192.25px;width:1200px;text-align:center;top:1606px;font-size:17.3px;color:#fff;letter-spacing:0.3px;">May</span>
<div style="left:1861.4px;top:1602.3px;width:135.4px;height:21.6px;background:#6f74e8;"></div>
<span class="T b" style="left:1329.25px;width:1200px;text-align:center;top:1606px;font-size:17.3px;color:#fff;letter-spacing:0.3px;">Jun</span>
<div style="left:1998.4px;top:1602.3px;width:135.4px;height:21.6px;background:#6f74e8;"></div>
<span class="T b" style="left:1466.25px;width:1200px;text-align:center;top:1606px;font-size:17.3px;color:#fff;letter-spacing:0.3px;">Jul</span>
<div style="left:2135.4px;top:1602.3px;width:135.4px;height:21.6px;background:#6f74e8;"></div>
<span class="T b" style="left:1603.25px;width:1200px;text-align:center;top:1606px;font-size:17.3px;color:#fff;letter-spacing:0.3px;">Aug</span>
<div style="left:2272.4px;top:1602.3px;width:135.4px;height:21.6px;background:#6f74e8;"></div>
<span class="T b" style="left:1740.25px;width:1200px;text-align:center;top:1606px;font-size:17.3px;color:#fff;letter-spacing:0.3px;">Sep</span>
<div style="left:2409.4px;top:1602.3px;width:135.4px;height:21.6px;background:#6f74e8;"></div>
<span class="T b" style="left:1877.25px;width:1200px;text-align:center;top:1606px;font-size:17.3px;color:#fff;letter-spacing:0.3px;">Oct</span>
<div style="left:2546.4px;top:1602.3px;width:135.4px;height:21.6px;background:#6f74e8;"></div>
<span class="T b" style="left:2014.25px;width:1200px;text-align:center;top:1606px;font-size:17.3px;color:#fff;letter-spacing:0.3px;">Nov</span>
<div style="left:2683.4px;top:1602.3px;width:135.4px;height:21.6px;background:#6f74e8;"></div>
<span class="T b" style="left:2151.25px;width:1200px;text-align:center;top:1606px;font-size:17.3px;color:#fff;letter-spacing:0.3px;">Dec</span>
<span class="T" style="left:73.6px;top:1634px;font-size:17.3px;letter-spacing:0.08px;">Current Assets</span>
<span class="T" style="right:2240.78px;top:1634px;font-size:17.3px;letter-spacing:0.42px;">(25,439)</span>
<span class="T" style="right:2120.78px;top:1634px;font-size:17.3px;letter-spacing:0.42px;">(12,542)</span>
<span class="T" style="right:2008.15px;top:1634px;font-size:17.3px;letter-spacing:0.25px;">3,294</span>
<span class="T" style="right:1888.16px;top:1634px;font-size:17.3px;letter-spacing:0.24px;">21,792</span>
<span class="T" style="right:1768.16px;top:1634px;font-size:17.3px;letter-spacing:0.24px;">42,627</span>
<span class="T" style="right:1592.74px;top:1634px;font-size:17.3px;letter-spacing:0.46px;">(4,133)</span>
<span class="T" style="right:1455.74px;top:1634px;font-size:17.3px;letter-spacing:0.46px;">(9,839)</span>
<span class="T" style="right:1318.78px;top:1634px;font-size:17.3px;letter-spacing:0.42px;">(15,386)</span>
<span class="T" style="right:1181.78px;top:1634px;font-size:17.3px;letter-spacing:0.42px;">(20,362)</span>
<span class="T" style="right:1044.78px;top:1634px;font-size:17.3px;letter-spacing:0.42px;">(24,884)</span>
<span class="T" style="right:907.78px;top:1634px;font-size:17.3px;letter-spacing:0.42px;">(28,866)</span>
<span class="T" style="right:770.78px;top:1634px;font-size:17.3px;letter-spacing:0.42px;">(28,999)</span>
<span class="T" style="right:633.78px;top:1634px;font-size:17.3px;letter-spacing:0.42px;">(28,703)</span>
<span class="T" style="right:496.78px;top:1634px;font-size:17.3px;letter-spacing:0.42px;">(27,991)</span>
<span class="T" style="right:359.78px;top:1634px;font-size:17.3px;letter-spacing:0.42px;">(27,126)</span>
<span class="T" style="right:222.78px;top:1634px;font-size:17.3px;letter-spacing:0.42px;">(26,272)</span>
<span class="T" style="right:85.78px;top:1634px;font-size:17.3px;letter-spacing:0.42px;">(25,439)</span>
<span class="T" style="left:73.6px;top:1657px;font-size:17.3px;letter-spacing:0.2px;">Non-Current Assets</span>
<span class="T" style="right:2248.16px;top:1657px;font-size:17.3px;letter-spacing:0.24px;">34,077</span>
<span class="T" style="right:2128.16px;top:1657px;font-size:17.3px;letter-spacing:0.24px;">30,377</span>
<span class="T" style="right:2008.16px;top:1657px;font-size:17.3px;letter-spacing:0.24px;">26,677</span>
<span class="T" style="right:1888.16px;top:1657px;font-size:17.3px;letter-spacing:0.24px;">22,977</span>
<span class="T" style="right:1768.16px;top:1657px;font-size:17.3px;letter-spacing:0.24px;">19,277</span>
<span class="T" style="right:1600.15px;top:1657px;font-size:17.3px;letter-spacing:0.25px;">6,390</span>
<span class="T" style="right:1463.16px;top:1657px;font-size:17.3px;letter-spacing:0.24px;">12,725</span>
<span class="T" style="right:1326.16px;top:1657px;font-size:17.3px;letter-spacing:0.24px;">19,008</span>
<span class="T" style="right:1189.16px;top:1657px;font-size:17.3px;letter-spacing:0.24px;">24,575</span>
<span class="T" style="right:1052.16px;top:1657px;font-size:17.3px;letter-spacing:0.24px;">29,722</span>
<span class="T" style="right:915.16px;top:1657px;font-size:17.3px;letter-spacing:0.24px;">34,230</span>
<span class="T" style="right:778.16px;top:1657px;font-size:17.3px;letter-spacing:0.24px;">34,896</span>
<span class="T" style="right:641.16px;top:1657px;font-size:17.3px;letter-spacing:0.24px;">35,199</span>
<span class="T" style="right:504.16px;top:1657px;font-size:17.3px;letter-spacing:0.24px;">35,002</span>
<span class="T" style="right:367.16px;top:1657px;font-size:17.3px;letter-spacing:0.24px;">34,694</span>
<span class="T" style="right:230.16px;top:1657px;font-size:17.3px;letter-spacing:0.24px;">34,385</span>
<span class="T" style="right:93.16px;top:1657px;font-size:17.3px;letter-spacing:0.24px;">34,077</span>
<span class="D b" style="left:377px;top:1124px;font-size:17.3px;letter-spacing:-0.33px;">Revenue</span>
<span class="D b" style="left:543.5px;top:1124px;font-size:17.3px;letter-spacing:0.2px;">EBITDA</span>
<span class="D b" style="left:706px;top:1124px;font-size:17.3px;letter-spacing:-0.3px;">Net Profit After Tax</span>
<svg style="left:0;top:1100px" width="2902" height="470" viewBox="0 1100 2902 470"><path d="M70.1 1161.5H1043.8" stroke="#5aaad8" stroke-width="1"/><path d="M70.1 1217.5H1043.8" stroke="#5aaad8" stroke-width="1"/><path d="M70.1 1274.5H1043.8" stroke="#5aaad8" stroke-width="1"/><path d="M70.1 1330.5H1043.8" stroke="#5aaad8" stroke-width="1"/><path d="M70.1 1386.5H1043.8" stroke="#5aaad8" stroke-width="1"/><path d="M70.1 1442.5H1043.8" stroke="#5aaad8" stroke-width="1"/><path d="M70.1 1498.5H1043.8" stroke="#4f86c6" stroke-width="1"/><path d="M70.5 1161.2V1503.8" stroke="#5aaad8" stroke-width="1"/><path d="M264.5 1161.2V1503.8" stroke="#5aaad8" stroke-width="1"/><path d="M459.5 1161.2V1503.8" stroke="#5aaad8" stroke-width="1"/><path d="M654.5 1161.2V1503.8" stroke="#5aaad8" stroke-width="1"/><path d="M848.5 1161.2V1503.8" stroke="#5aaad8" stroke-width="1"/><path d="M1043.5 1161.2V1503.8" stroke="#5aaad8" stroke-width="1"/><polyline points="166.97,1346.42 361.51,1313.17 556.05,1278.36 750.59,1246.01 945.13,1216.55" stroke="#e8776f" stroke-width="2.900" fill="none" stroke-linejoin="round"/><circle cx="166.97" cy="1346.42" r="5.400" fill="#e8776f"/><circle cx="361.51" cy="1313.17" r="5.400" fill="#e8776f"/><circle cx="556.05" cy="1278.36" r="5.400" fill="#e8776f"/><circle cx="750.59" cy="1246.01" r="5.400" fill="#e8776f"/><circle cx="945.13" cy="1216.55" r="5.400" fill="#e8776f"/><polyline points="166.97,1428.87 361.51,1408.9 556.05,1386.91 750.59,1366.91 945.13,1349.33" stroke="#5c9a3e" stroke-width="2.900" fill="none" stroke-linejoin="round"/><circle cx="166.97" cy="1428.87" r="5.400" fill="#5c9a3e"/><circle cx="361.51" cy="1408.9" r="5.400" fill="#5c9a3e"/><circle cx="556.05" cy="1386.91" r="5.400" fill="#5c9a3e"/><circle cx="750.59" cy="1366.91" r="5.400" fill="#5c9a3e"/><circle cx="945.13" cy="1349.33" r="5.400" fill="#5c9a3e"/><polyline points="166.97,1458.62 361.51,1446.91 556.05,1430.41 750.59,1415.4 945.13,1402.2" stroke="#4b4fd1" stroke-width="2.900" fill="none" stroke-linejoin="round"/><circle cx="166.97" cy="1458.62" r="5.400" fill="#4b4fd1"/><circle cx="361.51" cy="1446.91" r="5.400" fill="#4b4fd1"/><circle cx="556.05" cy="1430.41" r="5.400" fill="#4b4fd1"/><circle cx="750.59" cy="1415.4" r="5.400" fill="#4b4fd1"/><circle cx="945.13" cy="1402.2" r="5.400" fill="#4b4fd1"/><path d="M328 1131.200H372.6" stroke="#e8776f" stroke-width="2.700"/><circle cx="350.3" cy="1131.200" r="4.300" fill="#e8776f"/><path d="M488.5 1131.200H534.7" stroke="#5c9a3e" stroke-width="2.700"/><circle cx="511.6" cy="1131.200" r="4.300" fill="#5c9a3e"/><path d="M652.6 1131.200H698" stroke="#4b4fd1" stroke-width="2.700"/><circle cx="675.3" cy="1131.200" r="4.300" fill="#4b4fd1"/></svg>
<span class="D b" style="left:-432.18px;width:1200px;text-align:center;top:1515px;font-size:17.3px;letter-spacing:-0.1px;">2026</span>
<span class="D b" style="left:-237.64px;width:1200px;text-align:center;top:1515px;font-size:17.3px;letter-spacing:-0.1px;">2027</span>
<span class="D b" style="left:-43.1px;width:1200px;text-align:center;top:1515px;font-size:17.3px;letter-spacing:-0.1px;">2028</span>
<span class="D b" style="left:151.44px;width:1200px;text-align:center;top:1515px;font-size:17.3px;letter-spacing:-0.1px;">2029</span>
<span class="D b" style="left:345.98px;width:1200px;text-align:center;top:1515px;font-size:17.3px;letter-spacing:-0.1px;">2030</span>
<span class="D b" style="left:1065.4px;top:1154px;font-size:17.3px;letter-spacing:-0.45px;">60,000</span>
<span class="D b" style="left:1065.4px;top:1210px;font-size:17.3px;letter-spacing:-0.45px;">50,000</span>
<span class="D b" style="left:1065.4px;top:1266px;font-size:17.3px;letter-spacing:-0.45px;">40,000</span>
<span class="D b" style="left:1065.4px;top:1322px;font-size:17.3px;letter-spacing:-0.45px;">30,000</span>
<span class="D b" style="left:1065.4px;top:1378px;font-size:17.3px;letter-spacing:-0.45px;">20,000</span>
<span class="D b" style="left:1065.4px;top:1435px;font-size:17.3px;letter-spacing:-0.45px;">10,000</span>
<span class="D b" style="left:1065.4px;top:1490px;font-size:17.3px;">-</span>
<span class="D b" style="left:1767.3px;top:1124px;font-size:17.3px;letter-spacing:-0.43px;">Revenue</span>
<span class="D b" style="left:1933.5px;top:1124px;font-size:17.3px;letter-spacing:0.2px;">EBITDA</span>
<span class="D b" style="left:2096px;top:1124px;font-size:17.3px;letter-spacing:-0.32px;">Net Profit After Tax</span>
<svg style="left:0;top:1100px" width="2902" height="470" viewBox="0 1100 2902 470"><path d="M1174.2 1162H2735.4" stroke="#5aaad8" stroke-width="2"/><path d="M1174.2 1228.5H2735.4" stroke="#5aaad8" stroke-width="1"/><path d="M1174.2 1295.5H2735.4" stroke="#5aaad8" stroke-width="1"/><path d="M1174.2 1362.5H2735.4" stroke="#5aaad8" stroke-width="1"/><path d="M1174.2 1429.5H2735.4" stroke="#5aaad8" stroke-width="1"/><path d="M1174.2 1496H2735.4" stroke="#5aaad8" stroke-width="2"/><path d="M1174.5 1162V1501.9" stroke="#5aaad8" stroke-width="1"/><path d="M1304.5 1162V1501.9" stroke="#5aaad8" stroke-width="1"/><path d="M1434.5 1162V1501.9" stroke="#5aaad8" stroke-width="1"/><path d="M1564.5 1162V1501.9" stroke="#5aaad8" stroke-width="1"/><path d="M1694.5 1162V1501.9" stroke="#5aaad8" stroke-width="1"/><path d="M1824.5 1162V1501.9" stroke="#5aaad8" stroke-width="1"/><path d="M1954.5 1162V1501.9" stroke="#5aaad8" stroke-width="1"/><path d="M2084.5 1162V1501.9" stroke="#5aaad8" stroke-width="1"/><path d="M2214.5 1162V1501.9" stroke="#5aaad8" stroke-width="1"/><path d="M2344.5 1162V1501.9" stroke="#5aaad8" stroke-width="1"/><path d="M2474.5 1162V1501.9" stroke="#5aaad8" stroke-width="1"/><path d="M2604.5 1162V1501.9" stroke="#5aaad8" stroke-width="1"/><path d="M2735 1162V1501.9" stroke="#5aaad8" stroke-width="2"/><polyline points="1238.51,1187.72 1368.53,1216.88 1498.54,1187.72 1628.56,1200.96 1758.58,1182.5 1888.59,1200.96 2018.61,1193.07 2148.62,1182.5 2278.64,1200.96 2408.66,1187.72 2538.68,1195.74 2668.69,1193.07" stroke="#e8776f" stroke-width="2.900" fill="none" stroke-linejoin="round"/><circle cx="1238.51" cy="1187.72" r="5.400" fill="#e8776f"/><circle cx="1368.53" cy="1216.88" r="5.400" fill="#e8776f"/><circle cx="1498.54" cy="1187.72" r="5.400" fill="#e8776f"/><circle cx="1628.56" cy="1200.96" r="5.400" fill="#e8776f"/><circle cx="1758.58" cy="1182.5" r="5.400" fill="#e8776f"/><circle cx="1888.59" cy="1200.96" r="5.400" fill="#e8776f"/><circle cx="2018.61" cy="1193.07" r="5.400" fill="#e8776f"/><circle cx="2148.62" cy="1182.5" r="5.400" fill="#e8776f"/><circle cx="2278.64" cy="1200.96" r="5.400" fill="#e8776f"/><circle cx="2408.66" cy="1187.72" r="5.400" fill="#e8776f"/><circle cx="2538.68" cy="1195.74" r="5.400" fill="#e8776f"/><circle cx="2668.69" cy="1193.07" r="5.400" fill="#e8776f"/><polyline points="1238.51,1352.51 1368.53,1376.45 1498.54,1352.51 1628.56,1363.35 1758.58,1348.1 1888.59,1363.35 2018.61,1356.92 2148.62,1348.1 2278.64,1363.35 2408.66,1352.51 2538.68,1359.06 2668.69,1356.92" stroke="#5c9a3e" stroke-width="2.900" fill="none" stroke-linejoin="round"/><circle cx="1238.51" cy="1352.51" r="5.400" fill="#5c9a3e"/><circle cx="1368.53" cy="1376.45" r="5.400" fill="#5c9a3e"/><circle cx="1498.54" cy="1352.51" r="5.400" fill="#5c9a3e"/><circle cx="1628.56" cy="1363.35" r="5.400" fill="#5c9a3e"/><circle cx="1758.58" cy="1348.1" r="5.400" fill="#5c9a3e"/><circle cx="1888.59" cy="1363.35" r="5.400" fill="#5c9a3e"/><circle cx="2018.61" cy="1356.92" r="5.400" fill="#5c9a3e"/><circle cx="2148.62" cy="1348.1" r="5.400" fill="#5c9a3e"/><circle cx="2278.64" cy="1363.35" r="5.400" fill="#5c9a3e"/><circle cx="2408.66" cy="1352.51" r="5.400" fill="#5c9a3e"/><circle cx="2538.68" cy="1359.06" r="5.400" fill="#5c9a3e"/><circle cx="2668.69" cy="1356.92" r="5.400" fill="#5c9a3e"/><polyline points="1238.51,1393.71 1368.53,1417.12 1498.54,1404.54 1628.56,1417.52 1758.58,1410.56 1888.59,1426.08 2018.61,1422.07 2148.62,1415.91 2278.64,1427.55 2408.66,1419.39 2538.68,1424.21 2668.69,1422.6" stroke="#4b4fd1" stroke-width="2.900" fill="none" stroke-linejoin="round"/><circle cx="1238.51" cy="1393.71" r="5.400" fill="#4b4fd1"/><circle cx="1368.53" cy="1417.12" r="5.400" fill="#4b4fd1"/><circle cx="1498.54" cy="1404.54" r="5.400" fill="#4b4fd1"/><circle cx="1628.56" cy="1417.52" r="5.400" fill="#4b4fd1"/><circle cx="1758.58" cy="1410.56" r="5.400" fill="#4b4fd1"/><circle cx="1888.59" cy="1426.08" r="5.400" fill="#4b4fd1"/><circle cx="2018.61" cy="1422.07" r="5.400" fill="#4b4fd1"/><circle cx="2148.62" cy="1415.91" r="5.400" fill="#4b4fd1"/><circle cx="2278.64" cy="1427.55" r="5.400" fill="#4b4fd1"/><circle cx="2408.66" cy="1419.39" r="5.400" fill="#4b4fd1"/><circle cx="2538.68" cy="1424.21" r="5.400" fill="#4b4fd1"/><circle cx="2668.69" cy="1422.6" r="5.400" fill="#4b4fd1"/><path d="M1718.3 1131.200H1763.6" stroke="#e8776f" stroke-width="2.700"/><circle cx="1740.95" cy="1131.200" r="4.300" fill="#e8776f"/><path d="M1879.4 1131.200H1925" stroke="#5c9a3e" stroke-width="2.700"/><circle cx="1902.2" cy="1131.200" r="4.300" fill="#5c9a3e"/><path d="M2042 1131.200H2088.6" stroke="#4b4fd1" stroke-width="2.700"/><circle cx="2065.3" cy="1131.200" r="4.300" fill="#4b4fd1"/></svg>
<span class="D b" style="left:639.76px;width:1200px;text-align:center;top:1513px;font-size:17.3px;letter-spacing:0.1px;">Jan</span>
<span class="D b" style="left:769.78px;width:1200px;text-align:center;top:1513px;font-size:17.3px;letter-spacing:0.1px;">Feb</span>
<span class="D b" style="left:899.79px;width:1200px;text-align:center;top:1513px;font-size:17.3px;letter-spacing:0.1px;">Mar</span>
<span class="D b" style="left:1029.81px;width:1200px;text-align:center;top:1513px;font-size:17.3px;letter-spacing:0.1px;">Apr</span>
<span class="D b" style="left:1159.83px;width:1200px;text-align:center;top:1513px;font-size:17.3px;letter-spacing:0.1px;">May</span>
<span class="D b" style="left:1289.84px;width:1200px;text-align:center;top:1513px;font-size:17.3px;letter-spacing:0.1px;">Jun</span>
<span class="D b" style="left:1419.86px;width:1200px;text-align:center;top:1513px;font-size:17.3px;letter-spacing:0.1px;">Jul</span>
<span class="D b" style="left:1549.87px;width:1200px;text-align:center;top:1513px;font-size:17.3px;letter-spacing:0.1px;">Aug</span>
<span class="D b" style="left:1679.89px;width:1200px;text-align:center;top:1513px;font-size:17.3px;letter-spacing:0.1px;">Sep</span>
<span class="D b" style="left:1809.91px;width:1200px;text-align:center;top:1513px;font-size:17.3px;letter-spacing:0.1px;">Oct</span>
<span class="D b" style="left:1939.92px;width:1200px;text-align:center;top:1513px;font-size:17.3px;letter-spacing:0.1px;">Nov</span>
<span class="D b" style="left:2069.94px;width:1200px;text-align:center;top:1513px;font-size:17.3px;letter-spacing:0.1px;">Dec</span>
<span class="D b" style="left:2757.2px;top:1154px;font-size:17.3px;letter-spacing:-0.45px;">2,500</span>
<span class="D b" style="left:2757.2px;top:1221px;font-size:17.3px;letter-spacing:-0.45px;">2,000</span>
<span class="D b" style="left:2757.2px;top:1288px;font-size:17.3px;letter-spacing:-0.45px;">1,500</span>
<span class="D b" style="left:2757.2px;top:1355px;font-size:17.3px;letter-spacing:-0.45px;">1,000</span>
<span class="D b" style="left:2757.2px;top:1422px;font-size:17.3px;letter-spacing:-0.45px;">500</span>
<span class="D b" style="left:2757.2px;top:1489px;font-size:17.3px;">-</span>
<div style="left:11px;top:1670px;width:2880px;height:48.5px;background:#0a0a0a;"></div>
<div style="left:11px;top:1718px;width:2880px;height:33px;background:#121212;border-top:1px solid #303030;"></div>
<div style="left:0px;top:1751px;width:2902px;height:11px;background:#000;"></div>
<span class="S" style="left:-368.52px;width:1200px;text-align:center;top:1685px;font-size:21px;color:#fff;letter-spacing:-0.05px;">Contents</span>
<div style="left:298.7px;top:1676.2px;width:128.4px;height:36px;background:#fdeb5f;border-radius:7px;"></div>
<span class="S" style="left:-237.2px;width:1200px;text-align:center;top:1685px;font-size:21px;letter-spacing:-0.2px;">Dashboard</span>
<div style="left:439.8px;top:1676.2px;width:106.2px;height:36px;background:#fdeb5f;border-radius:7px;"></div>
<span class="S" style="left:-107.39px;width:1200px;text-align:center;top:1685px;font-size:21px;letter-spacing:-0.58px;">Revenue</span>
<div style="left:558.6px;top:1676.2px;width:158.8px;height:36px;background:#fdeb5f;border-radius:7px;"></div>
<span class="S" style="left:38px;width:1200px;text-align:center;top:1685px;font-size:21px;transform:scaleX(0.92);transform-origin:50% 0;">COGS &amp; OPEX</span>
<div style="left:730px;top:1676.2px;width:88.7px;height:36px;background:#fdeb5f;border-radius:7px;"></div>
<span class="S" style="left:174.26px;width:1200px;text-align:center;top:1685px;font-size:21px;letter-spacing:-0.17px;">Payroll</span>
<div style="left:831.8px;top:1676.2px;width:87.2px;height:36px;background:#fdeb5f;border-radius:7px;"></div>
<span class="S" style="left:275.4px;width:1200px;text-align:center;top:1685px;font-size:21px;transform:scaleX(0.88);transform-origin:50% 0;">CAPEX</span>
<div style="left:931.7px;top:1676.2px;width:113.4px;height:36px;background:#fdeb5f;border-radius:7px;"></div>
<span class="S" style="left:388.32px;width:1200px;text-align:center;top:1685px;font-size:21px;letter-spacing:-0.15px;">CapTable</span>
<div style="left:1057.8px;top:1676.2px;width:90.2px;height:36px;background:#fdeb5f;border-radius:7px;"></div>
<span class="S" style="left:502.91px;width:1200px;text-align:center;top:1685px;font-size:21px;letter-spacing:0.02px;">Capital</span>
<div style="left:1161px;top:1676.2px;width:42px;height:36px;background:#47b3e6;border-radius:7px;"></div>
<span class="S" style="left:582px;width:1200px;text-align:center;top:1685px;font-size:21px;transform:scaleX(0.85);transform-origin:50% 0;">IS</span>
<div style="left:1215.7px;top:1676.2px;width:48.3px;height:36px;background:#47b3e6;border-radius:7px;"></div>
<span class="S" style="left:639.85px;width:1200px;text-align:center;top:1685px;font-size:21px;transform:scaleX(0.85);transform-origin:50% 0;">CF</span>
<div style="left:1276.7px;top:1676.2px;width:48.3px;height:36px;background:#47b3e6;border-radius:7px;"></div>
<span class="S" style="left:700.85px;width:1200px;text-align:center;top:1685px;font-size:21px;transform:scaleX(0.81);transform-origin:50% 0;">BS</span>
<div style="left:1337.7px;top:1676.2px;width:115.1px;height:36px;background:#47b3e6;border-radius:7px;"></div>
<span class="S" style="left:794.98px;width:1200px;text-align:center;top:1685px;font-size:21px;letter-spacing:-0.54px;">Scenarios</span>
<div style="left:1465.6px;top:1676.2px;width:115.4px;height:36px;background:#47b3e6;border-radius:7px;"></div>
<span class="S" style="left:923.43px;width:1200px;text-align:center;top:1685px;font-size:21px;letter-spacing:0.26px;">Valuation</span>
<span class="S" style="left:1051.02px;width:1200px;text-align:center;top:1680px;font-size:21px;color:#16202c;letter-spacing:0.15px;z-index:3;">Summary</span>
<div style="left:1606.2px;top:1705px;width:89.8px;height:2.8px;background:#1e7e45;z-index:3;"></div>
<div style="left:1720.9px;top:1676.2px;width:47.8px;height:36px;background:#47b3e6;border-radius:7px;"></div>
<span class="S" style="left:1144.8px;width:1200px;text-align:center;top:1685px;font-size:21px;transform:scaleX(0.81);transform-origin:50% 0;">BE</span>
<div style="left:1781.9px;top:1676.2px;width:71.9px;height:36px;background:#47b3e6;border-radius:7px;"></div>
<span class="S" style="left:1217.85px;width:1200px;text-align:center;top:1685px;font-size:21px;transform:scaleX(0.9);transform-origin:50% 0;">ROIC</span>
<div style="left:1867px;top:1676.2px;width:84.7px;height:36px;background:#47b3e6;border-radius:7px;"></div>
<span class="S" style="left:1309.13px;width:1200px;text-align:center;top:1685px;font-size:21px;letter-spacing:-0.44px;">Charts</span>
<div style="left:1964.9px;top:1676.2px;width:63.9px;height:36px;background:#47b3e6;border-radius:7px;"></div>
<span class="S" style="left:1396.85px;width:1200px;text-align:center;top:1685px;font-size:21px;transform:scaleX(0.87);transform-origin:50% 0;">KPIs</span>
<div style="left:2041.2px;top:1676.2px;width:30.6px;height:36px;background:#47b3e6;border-radius:7px 0 0 7px;"></div>
<span class="S" style="left:2053px;top:1685px;font-size:21px;">Sc</span>
<div style="left:2071.8px;top:1672px;width:18px;height:44px;background:#0a0a0a;"></div>
<span class="S" style="left:26.6px;top:1728px;font-size:16px;color:#f0f0f0;letter-spacing:-0.45px;">Ready</span>
<span class="S b" style="left:172.2px;top:1728px;font-size:16px;color:#fff;letter-spacing:-0.06px;">Accessibility: Investigate</span>
<div style="left:2445px;top:1719px;width:60px;height:32px;background:#1d1d1d;"></div>
<span class="S" style="left:2839.3px;top:1728px;font-size:16px;color:#f0f0f0;letter-spacing:0.07px;">115%</span>
<svg style="left:0;top:1668px" width="2902" height="94" viewBox="0 1668 2902 94"><path d="M54 1685.500L46.500 1693.500L54 1701.500" stroke="#8c8c8c" stroke-width="1.600" fill="none"/><path d="M95.500 1685.500L103 1693.500L95.500 1701.500" stroke="#d0d0d0" stroke-width="1.600" fill="none"/><defs><linearGradient id="tg" x1="0" y1="0" x2="0" y2="1"><stop offset="0" stop-color="#ffffff"/><stop offset="0.35" stop-color="#e6f1fa"/><stop offset="1" stop-color="#cde4f5"/></linearGradient></defs><path d="M1586.8 1669.500H1715.1V1670Q1708.1 1670 1708.1 1677V1706Q1708.1 1712.200 1702.1 1712.200H1599.8Q1593.8 1712.200 1593.8 1706V1677Q1593.8 1670 1586.8 1670Z" fill="url(#tg)" stroke="#ffffff" stroke-width="1.200"/><path d="M292.4 1680.500V1707.500" stroke="#5a5a5a" stroke-width="1"/><path d="M433.2 1680.500V1707.500" stroke="#5a5a5a" stroke-width="1"/><path d="M552.5 1680.500V1707.500" stroke="#5a5a5a" stroke-width="1"/><path d="M723.7 1680.500V1707.500" stroke="#5a5a5a" stroke-width="1"/><path d="M825.2 1680.500V1707.500" stroke="#5a5a5a" stroke-width="1"/><path d="M925.3 1680.500V1707.500" stroke="#5a5a5a" stroke-width="1"/><path d="M1051.4 1680.500V1707.500" stroke="#5a5a5a" stroke-width="1"/><path d="M1154.5 1680.500V1707.500" stroke="#5a5a5a" stroke-width="1"/><path d="M1209.3 1680.500V1707.500" stroke="#5a5a5a" stroke-width="1"/><path d="M1270.3 1680.500V1707.500" stroke="#5a5a5a" stroke-width="1"/><path d="M1331.3 1680.500V1707.500" stroke="#5a5a5a" stroke-width="1"/><path d="M1459.2 1680.500V1707.500" stroke="#5a5a5a" stroke-width="1"/><path d="M1587.3 1680.500V1707.500" stroke="#5a5a5a" stroke-width="1"/><path d="M1714.5 1680.500V1707.500" stroke="#5a5a5a" stroke-width="1"/><path d="M1775.3 1680.500V1707.500" stroke="#5a5a5a" stroke-width="1"/><path d="M1860.4 1680.500V1707.500" stroke="#5a5a5a" stroke-width="1"/><path d="M1958.3 1680.500V1707.500" stroke="#5a5a5a" stroke-width="1"/><path d="M2035 1680.500V1707.500" stroke="#5a5a5a" stroke-width="1"/><circle cx="2090" cy="1693.200" r="1.900" fill="#e0e0e0"/><circle cx="2095.2" cy="1693.200" r="1.900" fill="#e0e0e0"/><circle cx="2100.4" cy="1693.200" r="1.900" fill="#e0e0e0"/><path d="M2135 1693.300H2151.500M2143.200 1685V1701.500" stroke="#e0e0e0" stroke-width="1.500"/><circle cx="2191.800" cy="1688" r="1.700" fill="#e0e0e0"/><circle cx="2191.800" cy="1694.5" r="1.700" fill="#e0e0e0"/><circle cx="2191.800" cy="1701" r="1.700" fill="#e0e0e0"/><rect x="2216" y="1679.500" width="643" height="28" rx="14" fill="#161616"/><path d="M2223.500 1693.300L2233 1687.500V1699.100Z" fill="#a0a0a0" stroke="#a0a0a0" stroke-width="1.500" stroke-linejoin="round"/><path d="M2851.500 1693.300L2842 1687.500V1699.100Z" fill="#a0a0a0" stroke="#a0a0a0" stroke-width="1.500" stroke-linejoin="round"/><rect x="2241.600" y="1687" width="537.500" height="12.600" rx="6.300" fill="#9d9d9d"/><path d="M100 1726.500H120.500V1732M100 1726.500V1745.500H106.500M100 1730.500H120.500M103 1735H108M103 1739.500H106.500" stroke="#e8e8e8" stroke-width="1.500" fill="none"/><circle cx="114.300" cy="1739.800" r="5.800" stroke="#e8e8e8" stroke-width="1.500" fill="none"/><circle cx="114.300" cy="1739.800" r="2.300" fill="#e8e8e8"/><circle cx="156" cy="1726.500" r="2.600" stroke="#e8e8e8" stroke-width="1.400" fill="none"/><path d="M147.500 1730.500L153.500 1732.500H158.500L164.500 1730.500M153.500 1732.500V1738L150 1746M158.500 1732.500V1737.500M153.500 1738.500L156 1741.500" stroke="#e8e8e8" stroke-width="1.500" fill="none" stroke-linecap="round"/><path d="M159 1739L167 1747M167 1739L159 1747" stroke="#e8e8e8" stroke-width="1.500"/><path d="M2465.500 1725.500H2483.500V1743.500H2465.500ZM2471.500 1725.500V1743.500M2477.500 1725.500V1743.500M2465.500 1731.500H2483.500M2465.500 1737.500H2483.500" stroke="#f0f0f0" stroke-width="1.900" fill="none"/><path d="M2524.500 1725.500H2545.500V1743.500H2524.500ZM2529.500 1729.500H2540.500V1740H2529.500ZM2532.500 1732.500H2537.500M2532.500 1734.800H2537.500M2532.500 1737H2537.500" stroke="#f0f0f0" stroke-width="1.700" fill="none"/><path d="M2584.500 1725.500H2605.500V1743.500H2584.500ZM2590.500 1725.500V1734.500H2599.500V1725.500M2584.500 1734.500H2590.500" stroke="#f0f0f0" stroke-width="1.900" fill="none"/><path d="M2633 1735H2645" stroke="#d0d0d0" stroke-width="1.400"/><path d="M2653.500 1735H2800.500" stroke="#9c9c9c" stroke-width="1.500"/><rect x="2726.500" y="1726" width="8" height="18" rx="1.500" fill="#b8b8b8"/><path d="M2808.500 1735H2820.500M2814.500 1729V1741" stroke="#d0d0d0" stroke-width="1.400"/></svg>
<div style="left:0px;top:0px;width:2902px;height:11px;background:#000;"></div>
<div style="left:0px;top:0px;width:11px;height:1762px;background:#000;"></div>
<div style="left:2891px;top:0px;width:11px;height:1762px;background:#000;"></div>
</div></body></html>
